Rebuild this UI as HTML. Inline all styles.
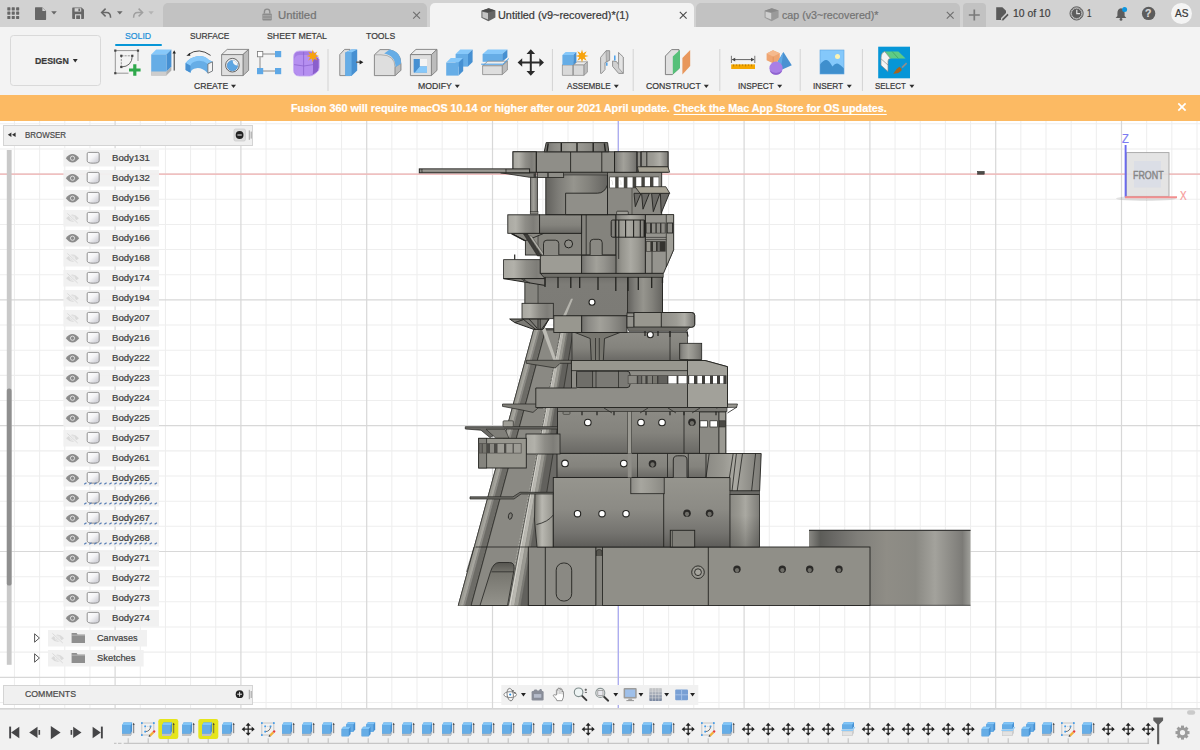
<!DOCTYPE html>
<html><head><meta charset="utf-8"><title>Fusion 360</title>
<style>
*{box-sizing:border-box;margin:0;padding:0}
html,body{width:1200px;height:750px;overflow:hidden;background:#fff;font-family:"Liberation Sans",sans-serif;}
#app{position:relative;width:1200px;height:750px;overflow:hidden;background:#fff}
.abs{position:absolute}
svg{position:absolute;overflow:visible}
.t{position:absolute;white-space:nowrap;transform-origin:0 50%;display:block;-webkit-text-stroke:0.22px}

</style></head><body>
<div id="app">
<svg class="abs" style="left:0;top:0" width="1200" height="750" viewBox="0 0 1200 750"><path d="M14.46 121V709M39.62 121V709M64.78 121V709M89.94 121V709M140.26 121V709M165.42 121V709M190.58 121V709M215.74 121V709M266.06 121V709M291.22 121V709M316.38 121V709M341.54 121V709M391.86 121V709M417.02 121V709M442.18 121V709M467.34 121V709M517.66 121V709M542.82 121V709M567.98 121V709M593.14 121V709M643.46 121V709M668.62 121V709M693.78 121V709M718.94 121V709M769.26 121V709M794.42 121V709M819.58 121V709M844.74 121V709M895.06 121V709M920.22 121V709M945.38 121V709M970.54 121V709M1020.86 121V709M1046.02 121V709M1071.18 121V709M1096.34 121V709M1146.66 121V709M1171.82 121V709M1196.98 121V709M0 123.78H1200M0 148.94H1200M0 199.26H1200M0 224.42H1200M0 249.58H1200M0 274.74H1200M0 325.06H1200M0 350.22H1200M0 375.38H1200M0 400.54H1200M0 450.86H1200M0 476.02H1200M0 501.18H1200M0 526.34H1200M0 576.66H1200M0 601.82H1200M0 626.98H1200M0 652.14H1200M0 702.46H1200" stroke="#eeeeee" stroke-width="1.05" fill="none"/><path d="M115.10 121V709M240.90 121V709M366.70 121V709M492.50 121V709M618.30 121V709M744.10 121V709M869.90 121V709M995.70 121V709M1121.50 121V709M0 174.10H1200M0 299.90H1200M0 425.70H1200M0 551.50H1200M0 677.30H1200" stroke="#d8d8d8" stroke-width="1.2" fill="none"/><path d="M0 174.1H1200" stroke="#f5b5b5" stroke-width="1.15" fill="none"/><path d="M618.3 121V709" stroke="#a6a6f4" stroke-width="1.15" fill="none"/><defs><linearGradient id="gCyl" x1="0" y1="0" x2="1" y2="0"><stop offset="0" stop-color="#72716d"/><stop offset="0.15" stop-color="#8b8a85"/><stop offset="0.4" stop-color="#a2a19a"/><stop offset="0.6" stop-color="#95948e"/><stop offset="0.85" stop-color="#7f7e79"/><stop offset="1" stop-color="#6e6d69"/></linearGradient><linearGradient id="gCylD" x1="0" y1="0" x2="1" y2="0"><stop offset="0" stop-color="#62615d"/><stop offset="0.2" stop-color="#7d7c77"/><stop offset="0.45" stop-color="#96958e"/><stop offset="0.7" stop-color="#83827c"/><stop offset="1" stop-color="#656460"/></linearGradient><linearGradient id="gPlatL" x1="0" y1="0" x2="1" y2="0"><stop offset="0" stop-color="#a9a8a1"/><stop offset="0.25" stop-color="#b2b1aa"/><stop offset="0.55" stop-color="#8e8d87"/><stop offset="0.8" stop-color="#7e7d78"/><stop offset="1" stop-color="#8b8a84"/></linearGradient><linearGradient id="gPlatR" x1="0" y1="0" x2="1" y2="0"><stop offset="0" stop-color="#8f8e88"/><stop offset="0.45" stop-color="#9d9c95"/><stop offset="0.7" stop-color="#b0afa8"/><stop offset="0.9" stop-color="#8a8984"/><stop offset="1" stop-color="#7a7974"/></linearGradient><linearGradient id="gWallV" x1="0" y1="0" x2="0" y2="1"><stop offset="0" stop-color="#96958e"/><stop offset="0.45" stop-color="#8c8b85"/><stop offset="0.8" stop-color="#74736f"/><stop offset="1" stop-color="#5e5d5a"/></linearGradient><linearGradient id="gWallV2" x1="0" y1="0" x2="0" y2="1"><stop offset="0" stop-color="#8d8c86"/><stop offset="0.55" stop-color="#84837d"/><stop offset="1" stop-color="#6a6965"/></linearGradient><linearGradient id="gBarb" x1="0" y1="0" x2="1" y2="0"><stop offset="0" stop-color="#8a8984"/><stop offset="0.07" stop-color="#5c5c58"/><stop offset="0.16" stop-color="#6a6966"/><stop offset="0.3" stop-color="#7f7e79"/><stop offset="0.48" stop-color="#8f8d86"/><stop offset="0.66" stop-color="#8a8983"/><stop offset="0.78" stop-color="#a3a29c"/><stop offset="0.88" stop-color="#8c8b86"/><stop offset="0.95" stop-color="#7c7b77"/><stop offset="1" stop-color="#a0a09b"/></linearGradient><linearGradient id="gBarbV" x1="0" y1="0" x2="0" y2="1"><stop offset="0" stop-color="#000"/><stop offset="0.12" stop-color="#000"/><stop offset="1" stop-color="#000"/></linearGradient><linearGradient id="gLeg" x1="0" y1="0" x2="1" y2="0"><stop offset="0" stop-color="#d2d1ca"/><stop offset="0.14" stop-color="#b9b8b1"/><stop offset="0.42" stop-color="#908f89"/><stop offset="0.58" stop-color="#6c6b67"/><stop offset="1" stop-color="#5c5b58"/></linearGradient><linearGradient id="gHullStrip" x1="0" y1="0" x2="1" y2="0"><stop offset="0" stop-color="#a8a7a0"/><stop offset="0.3" stop-color="#96958e"/><stop offset="0.45" stop-color="#6c6b66"/><stop offset="1" stop-color="#76756f"/></linearGradient><linearGradient id="gTur" x1="0" y1="0" x2="1" y2="0"><stop offset="0" stop-color="#7d7c77"/><stop offset="0.2" stop-color="#96958e"/><stop offset="0.5" stop-color="#abaaa3"/><stop offset="0.75" stop-color="#9a9992"/><stop offset="1" stop-color="#807f7a"/></linearGradient><linearGradient id="gMainW" x1="0" y1="0" x2="0" y2="1"><stop offset="0" stop-color="#6b6a66"/><stop offset="0.25" stop-color="#7d7c77"/><stop offset="1" stop-color="#7c7b76"/></linearGradient><linearGradient id="gNotch" x1="0" y1="0" x2="1" y2="0"><stop offset="0" stop-color="#8d8c86"/><stop offset="0.3" stop-color="#a7a69f"/><stop offset="0.6" stop-color="#9c9b94"/><stop offset="1" stop-color="#8a8983"/></linearGradient><linearGradient id="gConc" x1="0" y1="0" x2="1" y2="0"><stop offset="0" stop-color="#77766f"/><stop offset="0.4" stop-color="#b9b8b1"/><stop offset="1" stop-color="#94938c"/></linearGradient><linearGradient id="gArch" x1="0" y1="0" x2="0" y2="1"><stop offset="0" stop-color="#55544f"/><stop offset="0.25" stop-color="#77766f"/><stop offset="1" stop-color="#94938c"/></linearGradient><linearGradient id="gCurveR" x1="0" y1="0" x2="1" y2="0"><stop offset="0" stop-color="#8b8a84"/><stop offset="0.3" stop-color="#999891"/><stop offset="0.52" stop-color="#aaa9a2"/><stop offset="0.75" stop-color="#94938d"/><stop offset="1" stop-color="#7d7c77"/></linearGradient><linearGradient id="gShadeB" x1="0" y1="0" x2="0" y2="1"><stop offset="0.4" stop-color="#000" stop-opacity="0"/><stop offset="1" stop-color="#000" stop-opacity="0.22"/></linearGradient><linearGradient id="gShade" x1="0" y1="0" x2="0" y2="1"><stop offset="0" stop-color="#000" stop-opacity="0.22"/><stop offset="1" stop-color="#000" stop-opacity="0"/></linearGradient></defs><path d="M534.0 328.7L580.0 328.7L580.0 605.5L458.3 605.5z" fill="#6b6a66" stroke="#22221f" stroke-width="0.9" stroke-linejoin="round"/><path d="M533.6 330.0L535.8 330.0L460.6 605.5L458.3 605.5z" fill="#9d9c95" stroke="#9d9c95" stroke-width="0.3" stroke-linejoin="round"/><path d="M535.8 330.0L538.4 330.0L463.5 605.5L460.6 605.5z" fill="#a6a59e" stroke="#a6a59e" stroke-width="0.3" stroke-linejoin="round"/><path d="M538.4 330.0L540.2 330.0L465.4 605.5L463.5 605.5z" fill="#8a8984" stroke="#8a8984" stroke-width="0.3" stroke-linejoin="round"/><path d="M540.2 330.0L545.6 330.0L471.2 605.5L465.4 605.5z" fill="#6d6c67" stroke="#6d6c67" stroke-width="0.3" stroke-linejoin="round"/><path d="M533.6 330L458.3 605.5M545.6 330L471.2 605.5" fill="none" stroke="#22221f" stroke-width="0.6"/><path d="M545.6 330.0L561.0 330.0L509.0 605.5L471.2 605.5z" fill="#8a8983" stroke="#22221f" stroke-width="0.6" stroke-linejoin="round"/><path d="M560.3 332.0L561.8 332.0L510.9 605.5L508.5 605.5z" fill="#d3d2cb" stroke="#d3d2cb" stroke-width="0.3" stroke-linejoin="round"/><path d="M561.8 332.0L564.1 332.0L514.4 605.5L510.9 605.5z" fill="#bab9b2" stroke="#bab9b2" stroke-width="0.3" stroke-linejoin="round"/><path d="M564.1 332.0L566.6 332.0L518.4 605.5L514.4 605.5z" fill="#9a9992" stroke="#9a9992" stroke-width="0.3" stroke-linejoin="round"/><path d="M566.6 332.0L568.2 332.0L520.7 605.5L518.4 605.5z" fill="#7b7a75" stroke="#7b7a75" stroke-width="0.3" stroke-linejoin="round"/><path d="M568.2 332.0L573.0 332.0L528.2 605.5L520.7 605.5z" fill="#62615d" stroke="#62615d" stroke-width="0.3" stroke-linejoin="round"/><path d="M560.3 332L508.5 605.5M573.0 332L528.2 605.5" fill="none" stroke="#22221f" stroke-width="0.6"/><path d="M559 340L507 605.5" fill="none" stroke="#c9c8c1" stroke-width="0.5" stroke-dasharray="2 1.2"/><path d="M541.0 327.0L545.0 327.0L557.0 362.0L554.0 362.0z" fill="#bdbcb5"/><path d="M475.5 547H528.3" fill="none" stroke="#22221f" stroke-width="0.8"/><path d="M466.5 572L474 547" fill="none" stroke="#22221f" stroke-width="0.6"/><path d="M480 605.5L490.6 571.5Q493.5 562.5 499 562.5H509.5Q515.2 562.5 514 570L507.5 605.5z" fill="url(#gArch)" stroke="#22221f" stroke-width="0.8"/><path d="M491.5 571.8H513.6" fill="none" stroke="#22221f" stroke-width="0.7"/><ellipse cx="510.3" cy="516" rx="1.9" ry="3.3" fill="#807f79" stroke="#22221f" stroke-width="0.8" transform="rotate(12 510.3 516)"/><rect x="809.0" y="530.0" width="161.5" height="75.6" fill="url(#gBarb)"/><path d="M809 530.3H970.5" fill="none" stroke="#3a3a38" stroke-width="1.2"/><path d="M809 605.3H970.5" fill="none" stroke="#4a4a47" stroke-width="0.9"/><rect x="602.5" y="547.0" width="267.5" height="58.5" fill="#908f88" stroke="#22221f" stroke-width="0.9"/><path d="M708.3 547V605.5" fill="none" stroke="#22221f" stroke-width="0.9"/><rect x="595.8" y="547.0" width="6.7" height="58.5" fill="#85847e" stroke="#22221f" stroke-width="0.7"/><path d="M596.2 556v-4q0-2.6 3-2.6t3 2.6v4" fill="#56554f" stroke="#22221f" stroke-width="0.6"/><circle cx="698.0" cy="572.2" r="6.3" fill="#9a9992" stroke="#22221f" stroke-width="0.9"/><circle cx="698.0" cy="572.2" r="3.4" fill="#a6a59e" stroke="#22221f" stroke-width="0.9"/><circle cx="737.0" cy="569.3" r="3.7" fill="#2b2a28"/><path d="M735.0 569.8a2.04 1.85 0 0 1 4.07 0v1.11l-2.04 2.04l-2.04 -2.04z" fill="#6f6e68"/><circle cx="782.3" cy="569.3" r="3.7" fill="#2b2a28"/><path d="M780.3 569.8a2.04 1.85 0 0 1 4.07 0v1.11l-2.04 2.04l-2.04 -2.04z" fill="#6f6e68"/><circle cx="809.7" cy="569.3" r="3.7" fill="#2b2a28"/><path d="M807.7 569.8a2.04 1.85 0 0 1 4.07 0v1.11l-2.04 2.04l-2.04 -2.04z" fill="#6f6e68"/><circle cx="839.0" cy="569.3" r="3.7" fill="#2b2a28"/><path d="M837.0 569.8a2.04 1.85 0 0 1 4.07 0v1.11l-2.04 2.04l-2.04 -2.04z" fill="#6f6e68"/><rect x="528.3" y="547.0" width="67.5" height="58.5" fill="#8c8b85" stroke="#22221f" stroke-width="0.9"/><path d="M545.3 547V605.5" fill="none" stroke="#22221f" stroke-width="0.9"/><rect x="556.2" y="563.0" width="15.5" height="38.0" rx="7.2" fill="#8a8983" stroke="#22221f" stroke-width="0.9"/><path d="M535.0 492.5L553.3 492.5L553.3 547.0L537.0 547.0L534.5 520.0z" fill="url(#gConc)" stroke="#22221f" stroke-width="0.8" stroke-linejoin="round"/><path d="M553.3 515Q548 522 536.5 524.5" fill="none" stroke="#22221f" stroke-width="0.8"/><rect x="553.3" y="477.5" width="177.0" height="69.5" fill="url(#gWallV)" stroke="#22221f" stroke-width="0.9"/><path d="M663.7 493V547" fill="none" stroke="#22221f" stroke-width="0.9"/><rect x="630.8" y="477.5" width="33.4" height="16.2" fill="url(#gNotch)" stroke="#22221f" stroke-width="0.8"/><circle cx="577.5" cy="513.7" r="3.2" fill="#fff" stroke="#22221f" stroke-width="1.1"/><circle cx="602.0" cy="513.7" r="3.2" fill="#fff" stroke="#22221f" stroke-width="1.1"/><circle cx="626.0" cy="513.7" r="3.2" fill="#fff" stroke="#22221f" stroke-width="1.1"/><circle cx="687.0" cy="513.2" r="3.8" fill="#2b2a28"/><path d="M684.9 513.7a2.09 1.90 0 0 1 4.18 0v1.14l-2.09 2.09l-2.09 -2.09z" fill="#6f6e68"/><circle cx="709.6" cy="513.2" r="3.8" fill="#2b2a28"/><path d="M707.5 513.7a2.09 1.90 0 0 1 4.18 0v1.14l-2.09 2.09l-2.09 -2.09z" fill="#6f6e68"/><rect x="670.3" y="530.3" width="24.4" height="16.7" fill="#807f79" stroke="#22221f" stroke-width="0.9"/><path d="M672.4 531V547" fill="none" stroke="#22221f" stroke-width="0.6"/><rect x="730.0" y="494.4" width="29.6" height="52.6" fill="url(#gCurveR)" stroke="#22221f" stroke-width="0.8"/><rect x="730" y="494.4" width="29.6" height="52.6" fill="url(#gShadeB)"/><path d="M470.0 496.8L513.0 496.8L520.0 492.3L553.3 492.3L553.3 494.0L521.0 494.0L514.0 499.0L470.0 499.0z" fill="#6e6d68" stroke="#22221f" stroke-width="0.7" stroke-linejoin="round"/><rect x="557.0" y="453.3" width="151.0" height="24.2" fill="url(#gWallV2)" stroke="#22221f" stroke-width="0.9"/><path d="M706.0 453.5L761.2 453.5L759.6 491.0L730.0 491.0L730.0 477.6L706.0 477.6z" fill="url(#gCurveR)" stroke="#22221f" stroke-width="0.9" stroke-linejoin="round"/><rect x="730.0" y="490.9" width="29.6" height="3.5" fill="#6a6965" stroke="#22221f" stroke-width="0.6"/><path d="M637.5 453.3V477.5M667.5 453.3V477.5M688.3 453.3V477.5M709.2 453.5L706 477.6M733.2 453.5L729.4 477.6M736.4 453.5L732 491M742.5 453.5L737.2 491M755.6 453.5L751.6 491" fill="none" stroke="#22221f" stroke-width="0.8"/><circle cx="623.8" cy="463.6" r="3.3" fill="#fff" stroke="#22221f" stroke-width="1.1"/><circle cx="565.0" cy="463.4" r="3.3" fill="#fff" stroke="#22221f" stroke-width="1.1"/><circle cx="652.5" cy="463.7" r="3.8" fill="#2b2a28"/><path d="M650.4 464.2a2.09 1.90 0 0 1 4.18 0v1.14l-2.09 2.09l-2.09 -2.09z" fill="#6f6e68"/><path d="M673.3 477.5V460Q673.3 455.8 677.5 455.8H682.8Q687 455.8 687 460V477.5" fill="#868580" stroke="#22221f" stroke-width="0.9"/><rect x="557.5" y="407.5" width="168.3" height="45.8" fill="url(#gWallV2)" stroke="#22221f" stroke-width="0.9"/><rect x="627.5" y="408.0" width="4.2" height="45.3" fill="#9b9a93" stroke="#22221f" stroke-width="0.5"/><rect x="627.8" y="453.3" width="3.8" height="24.2" fill="#8f8e88"/><path d="M684 412V453.3M699.5 412V453.3M719 412V453.3" fill="none" stroke="#22221f" stroke-width="0.8"/><rect x="699.5" y="412.0" width="19.5" height="41.3" fill="#8b8a84" stroke="#22221f" stroke-width="0.7"/><rect x="719.0" y="412.0" width="6.8" height="41.3" fill="#9a9992" stroke="#22221f" stroke-width="0.7"/><circle cx="587.8" cy="422.5" r="3.3" fill="#fff" stroke="#22221f" stroke-width="1.1"/><circle cx="641.0" cy="422.5" r="3.3" fill="#fff" stroke="#22221f" stroke-width="1.1"/><circle cx="662.0" cy="422.5" r="3.3" fill="#fff" stroke="#22221f" stroke-width="1.1"/><circle cx="692.0" cy="422.3" r="3.8" fill="#2b2a28"/><path d="M689.9 422.8a2.09 1.90 0 0 1 4.18 0v1.14l-2.09 2.09l-2.09 -2.09z" fill="#6f6e68"/><rect x="700.0" y="420.8" width="7.5" height="6.2" fill="#fff" stroke="#22221f" stroke-width="0.7"/><rect x="710.0" y="420.8" width="7.5" height="6.2" fill="#fff" stroke="#22221f" stroke-width="0.7"/><rect x="719.4" y="420.8" width="6.0" height="6.2" fill="#4a4945" stroke="#22221f" stroke-width="0.5"/><rect x="557.5" y="407.5" width="169.5" height="4.1" fill="#7a7974" stroke="#22221f" stroke-width="0.6"/><path d="M582 411.6v3.6M597 411.6v3.6M614 411.6v3.6M646 411.6v3.6M670 411.6v3.6M684 411.6v3.6M716 411.6v3.6" fill="none" stroke="#22221f" stroke-width="1.2"/><path d="M604 408l8 5M648 408l-8 5M668 408l8 5M700 408l-8 5M716 408l10 -2" fill="none" stroke="#22221f" stroke-width="0.7"/><rect x="563.0" y="411.6" width="7.0" height="2.8" rx="1" fill="#8a8983" stroke="#22221f" stroke-width="0.5"/><rect x="526.0" y="434.0" width="34.0" height="20.0" fill="url(#gPlatL)" stroke="#22221f" stroke-width="0.8"/><path d="M465.3 426.7L557.5 426.7L557.5 429.0L505.0 429.0L490.0 437.6L481.0 430.2L465.3 429.0z" fill="#6a6965" stroke="#22221f" stroke-width="0.7" stroke-linejoin="round"/><path d="M486.0 429.2L505.0 429.2L509.0 438.3L496.0 438.3z" fill="#807f79" stroke="#22221f" stroke-width="0.6" stroke-linejoin="round"/><rect x="503.0" y="420.8" width="10.3" height="5.9" rx="1" fill="#a09f98" stroke="#22221f" stroke-width="0.6"/><rect x="478.7" y="438.3" width="47.6" height="29.7" fill="#98978f" stroke="#22221f" stroke-width="0.9"/><rect x="478.7" y="438.3" width="8.0" height="29.7" fill="#85847e" stroke="#22221f" stroke-width="0.7"/><rect x="478.7" y="443.2" width="42.8" height="10.2" fill="#4c4b47"/><rect x="479.4" y="443.8" width="2.4" height="9.0" fill="#6d6c67"/><rect x="482.8" y="443.8" width="3.4" height="9.0" fill="#77766f"/><rect x="490.0" y="443.8" width="4.0" height="9.0" fill="#8a8983"/><rect x="497.5" y="443.8" width="6.5" height="9.0" fill="#9d9c95"/><rect x="506.3" y="443.8" width="6.3" height="9.0" fill="#9d9c95"/><rect x="513.8" y="443.8" width="7.0" height="9.0" fill="#9d9c95"/><path d="M526.3 360.3L571.3 360.3L571.3 363.3L560.0 363.3L555.3 368.0L540.0 365.5L526.3 363.3z" fill="#77766f" stroke="#22221f" stroke-width="0.7" stroke-linejoin="round"/><path d="M502.5 404.0L543.0 404.0L543.0 408.0L538.0 408.0L533.0 412.4L522.0 410.0L502.5 406.4z" fill="#807f79" stroke="#22221f" stroke-width="0.7" stroke-linejoin="round"/><path d="M571.5 360.5L705.0 360.5L727.5 366.7L727.5 407.5L535.8 407.5L535.8 388.0L571.5 388.0z" fill="#8f8e88" stroke="#22221f" stroke-width="0.9" stroke-linejoin="round"/><path d="M687.5 360.5L705.0 360.5L727.5 366.7L727.5 407.5L687.5 407.5z" fill="#a2a19a" stroke="#22221f" stroke-width="0.9" stroke-linejoin="round"/><rect x="576.7" y="371.2" width="53.3" height="16.4" rx="3" fill="#7b7a75" stroke="#22221f" stroke-width="0.9"/><rect x="576.7" y="371.2" width="16.0" height="16.4" fill="#6f6e69" stroke="#22221f" stroke-width="0.7"/><path d="M571.5 388H576.7" fill="none" stroke="#22221f" stroke-width="0.8"/><rect x="627.8" y="375.3" width="98.6" height="8.7" fill="#3f3e3b"/><rect x="628.4" y="375.9" width="8.4" height="7.6" fill="#8b8a84"/><rect x="638.2" y="375.9" width="3.0" height="7.6" fill="#6b6a66"/><rect x="642.2" y="375.9" width="3.2" height="7.6" fill="#85847e"/><rect x="647.6" y="375.9" width="4.4" height="7.6" fill="#807f79"/><rect x="653.0" y="375.9" width="4.0" height="7.6" fill="#77766f"/><rect x="658.4" y="375.9" width="8.6" height="7.6" fill="#62615d"/><rect x="668.4" y="375.9" width="8.2" height="7.6" fill="#fff"/><rect x="678.4" y="375.9" width="8.2" height="7.6" fill="#fff"/><rect x="689.2" y="375.9" width="4.8" height="7.6" fill="#fff"/><rect x="697.4" y="375.9" width="4.6" height="7.6" fill="#fff"/><rect x="705.0" y="375.9" width="5.0" height="7.6" fill="#fff"/><rect x="713.0" y="375.9" width="4.0" height="7.6" fill="#fff"/><rect x="720.0" y="375.9" width="3.4" height="7.6" fill="#fff"/><path d="M727.5 404.0L737.5 404.0L736.6 407.3L727.5 407.5z" fill="#9a9992" stroke="#22221f" stroke-width="0.7" stroke-linejoin="round"/><path d="M737 407L727.5 413" fill="none" stroke="#22221f" stroke-width="0.8"/><rect x="572.0" y="332.5" width="115.5" height="28.0" fill="url(#gWallV2)" stroke="#22221f" stroke-width="0.7"/><path d="M670 331V360.5" fill="none" stroke="#22221f" stroke-width="0.8"/><path d="M575.0 332.5L620.0 332.5L604.5 338.5L603.3 360.5L591.3 360.5L590.2 338.5z" fill="#77766f" stroke="#22221f" stroke-width="0.8" stroke-linejoin="round"/><path d="M595.5 338V360M599.3 338V360" fill="none" stroke="#22221f" stroke-width="0.7"/><rect x="679.7" y="343.3" width="22.0" height="16.3" fill="url(#gCyl)" stroke="#22221f" stroke-width="0.8"/><rect x="571.5" y="360.5" width="116.0" height="10.2" fill="#98978f" stroke="#22221f" stroke-width="0.8"/><path d="M596 370.7V388M618.5 370.7V388" fill="none" stroke="#22221f" stroke-width="0.7"/><circle cx="650.3" cy="334.7" r="3.0" fill="#fff" stroke="#22221f" stroke-width="1.1"/><rect x="525.0" y="273.3" width="137.5" height="42.7" fill="url(#gMainW)" stroke="#22221f" stroke-width="0.9"/><rect x="525.0" y="273.3" width="13.0" height="42.7" fill="#878680" stroke="#22221f" stroke-width="0.6"/><rect x="627.5" y="277.0" width="35.0" height="36.0" fill="url(#gCylD)" stroke="#22221f" stroke-width="0.8"/><path d="M541.5 273.3L663.3 273.3L663.3 277.3L541.5 277.3z" fill="#6f6e69" stroke="#22221f" stroke-width="0.6" stroke-linejoin="round"/><path d="M545 277v10M558 277v11M570.8 277v11M579.7 277v11M598 277v13M615.8 277v14M628 277v14M638.3 277v13M651.7 277v11M662.5 277v6" fill="none" stroke="#22221f" stroke-width="1.3"/><path d="M571.0 298.8L573.0 298.8L566.0 316.0L563.0 316.0z" fill="#b5b4ad"/><circle cx="592.0" cy="302.2" r="3.0" fill="#fff" stroke="#22221f" stroke-width="1.1"/><path d="M509.7 319.0L549.0 319.0L543.0 329.3L533.5 329.3L514.8 322.6z" fill="#7b7a75" stroke="#22221f" stroke-width="1.0" stroke-linejoin="round"/><path d="M538 319V329.3M540.200 319V329.3M523 319L535.500 329.300M529 319L537 328M549 319L541.500 329.300M514.800 322.600L523.500 319.600" fill="none" stroke="#22221f" stroke-width="0.9"/><rect x="522.0" y="303.3" width="31.3" height="15.4" fill="url(#gPlatL)" stroke="#22221f" stroke-width="0.8"/><rect x="553.8" y="315.8" width="27.9" height="16.7" fill="#98978f" stroke="#22221f" stroke-width="0.9"/><rect x="581.7" y="315.8" width="45.3" height="16.7" fill="url(#gCyl)" stroke="#22221f" stroke-width="0.9"/><rect x="627.0" y="313.0" width="7.0" height="14.4" fill="#94938d" stroke="#22221f" stroke-width="0.8"/><path d="M627 316.5H634" fill="none" stroke="#22221f" stroke-width="0.6"/><path d="M634 312.5H691.5Q694.7 312.5 694.7 315.5V324.4Q694.7 327.2 691.5 327.2H634z" fill="#98978f" stroke="#22221f" stroke-width="0.9"/><path d="M661.3 312.5H691.5Q694.7 312.5 694.7 315.5V324.4Q694.7 327.2 691.5 327.2H661.3z" fill="url(#gPlatR)" stroke="#22221f" stroke-width="0.9"/><path d="M627.0 327.2L690.0 327.2L686.0 331.4L629.0 331.4z" fill="#6d6c67" stroke="#22221f" stroke-width="0.6" stroke-linejoin="round"/><path d="M645 331v5M658 331v5M670 331v6M686.8 330.5l1.2 6" fill="none" stroke="#22221f" stroke-width="1.2"/><path d="M503.5 259.6L540.3 259.6L540.3 273.3L545.0 278.6L503.5 278.6z" fill="url(#gPlatL)" stroke="#22221f" stroke-width="0.8" stroke-linejoin="round"/><path d="M503.5 278.6L544.8 278.6L544.8 285.4z" fill="#817f7a" stroke="#22221f" stroke-width="1.0" stroke-linejoin="round"/><path d="M521 278.600L530 283M525.500 278.600L522.500 281.800" fill="none" stroke="#22221f" stroke-width="0.7"/><path d="M514.7 254.5V259.6" fill="none" stroke="#22221f" stroke-width="1.2"/><rect x="540.3" y="254.9" width="41.3" height="18.4" fill="#9d9c95" stroke="#22221f" stroke-width="0.9"/><rect x="581.6" y="254.9" width="37.1" height="18.4" fill="url(#gCyl)" stroke="#22221f" stroke-width="0.9"/><rect x="525.4" y="233.3" width="90.6" height="21.6" fill="#85847e" stroke="#22221f" stroke-width="0.9"/><rect x="525.4" y="233.3" width="12.6" height="21.6" fill="#8f8e88" stroke="#22221f" stroke-width="0.6"/><path d="M511.5 233.3L544.0 233.3L530.2 239.0L524.9 240.7z" fill="#8a8983" stroke="#22221f" stroke-width="0.9" stroke-linejoin="round"/><path d="M511.5 233.6L524.9 240.7" fill="none" stroke="#22221f" stroke-width="1.4"/><path d="M523.5 234.0L527.5 234.0L541.5 256.0L537.5 256.0z" fill="#3d3c39" stroke="#22221f" stroke-width="0.5" stroke-linejoin="round"/><path d="M529.0 236.0L531.5 236.0L544.5 255.0L542.0 255.0z" fill="#b1b0a9" stroke="#22221f" stroke-width="0.4" stroke-linejoin="round"/><rect x="581.6" y="214.8" width="34.4" height="40.1" fill="#84837d" stroke="#22221f" stroke-width="0.9"/><path d="M586.2 214.8V254.9" fill="none" stroke="#22221f" stroke-width="0.8"/><path d="M543.5 254.9V243.6Q543.5 240.2 546.9 240.2H555.4Q558.8 240.2 558.8 243.6V254.9" fill="#8a8983" stroke="#22221f" stroke-width="0.9"/><path d="M590.1 254.9V242.70000000000002Q590.1 239.3 593.5 239.3H598.8000000000001Q602.2 239.3 602.2 242.70000000000002V254.9" fill="#8a8983" stroke="#22221f" stroke-width="0.9"/><circle cx="568.6" cy="243.9" r="4.0" fill="#8d8c86" stroke="#22221f" stroke-width="1.0"/><rect x="507.8" y="214.8" width="31.8" height="18.5" fill="url(#gPlatL)" stroke="#22221f" stroke-width="0.9"/><rect x="539.6" y="214.8" width="42.0" height="18.5" fill="url(#gWallV2)" stroke="#22221f" stroke-width="0.9"/><path d="M645.3 214.6L673.6 214.6L673.6 249.8L663.5 273.3L645.3 273.3z" fill="#95948e" stroke="#22221f" stroke-width="0.9" stroke-linejoin="round"/><path d="M666.3 214.6L673.6 214.6L673.6 249.8L666.3 266.8z" fill="#9f9e97" stroke="#22221f" stroke-width="0.7" stroke-linejoin="round"/><path d="M652 241V273.3" fill="none" stroke="#22221f" stroke-width="0.8"/><rect x="645.8" y="222.6" width="19.8" height="10.8" fill="#383734"/><rect x="646.6" y="223.4" width="3.4" height="9.4" fill="#8d8c86"/><rect x="652.0" y="223.4" width="3.4" height="9.4" fill="#8d8c86"/><rect x="656.8" y="223.4" width="3.2" height="9.4" fill="#8d8c86"/><rect x="661.4" y="223.4" width="3.4" height="9.4" fill="#8d8c86"/><rect x="667.2" y="223.0" width="5.4" height="10.0" fill="#908f89" stroke="#22221f" stroke-width="0.9"/><path d="M645.3 237.4H666.3M645.3 239.6H666.3" fill="none" stroke="#22221f" stroke-width="0.6"/><rect x="645.8" y="241.2" width="19.8" height="10.4" fill="#34332f"/><rect x="646.6" y="241.9" width="3.8" height="9.1" fill="#98978f"/><rect x="653.0" y="241.9" width="3.0" height="9.1" fill="#8a8983"/><rect x="657.6" y="241.9" width="2.2" height="9.1" fill="#6a6965"/><rect x="616.0" y="214.6" width="29.3" height="58.7" fill="url(#gTur)" stroke="#22221f" stroke-width="0.9"/><rect x="611.2" y="220.0" width="34.1" height="17.2" rx="1.6" fill="url(#gTur)" stroke="#22221f" stroke-width="1.0"/><path d="M615.6 220V237.2M644.4 220V237.2" fill="none" stroke="#22221f" stroke-width="1.6"/><path d="M618.8 220V237.2M625.6 220V237.2M633.6 220V237.2M640.3 220V237.2" fill="none" stroke="#22221f" stroke-width="1.1"/><path d="M618.7 237.2V259" fill="none" stroke="#22221f" stroke-width="0.8"/><rect x="530.5" y="177.0" width="7.1" height="36.2" fill="url(#gCyl)" stroke="#22221f" stroke-width="0.7"/><rect x="530.2" y="211.6" width="7.8" height="2.4" fill="#8a8983" stroke="#22221f" stroke-width="0.5"/><rect x="545.8" y="172.0" width="61.7" height="42.6" fill="url(#gCylD)" stroke="#22221f" stroke-width="0.9"/><path d="M565.6 214.6V193.2H597.5Q604.5 193.2 607.5 185V214.6z" fill="#908f89" stroke="#22221f" stroke-width="0.9"/><rect x="607.5" y="172.0" width="54.2" height="42.6" fill="#8a8983" stroke="#22221f" stroke-width="0.9"/><path d="M632 188V214.6" fill="none" stroke="#22221f" stroke-width="0.5"/><rect x="609.4" y="176.6" width="49.6" height="11.6" fill="#45443f"/><rect x="610.0" y="177.3" width="5.2" height="10.3" fill="#fff"/><rect x="618.6" y="177.3" width="5.2" height="10.3" fill="#fff"/><rect x="627.4" y="177.3" width="5.2" height="10.3" fill="#fff"/><rect x="636.2" y="177.3" width="5.2" height="10.3" fill="#fff"/><rect x="644.8" y="177.3" width="5.2" height="10.3" fill="#fff"/><rect x="653.4" y="177.3" width="5.2" height="10.3" fill="#fff"/><path d="M619.8 180q1.6 1 1.2 5M611.4 180q1.6 1 1.2 5" fill="none" stroke="#d8d8d4" stroke-width="0.8"/><path d="M634.0 193.3L641.0 193.3L635.3 206.7z" fill="#6a6965" stroke="#22221f" stroke-width="0.9" stroke-linejoin="round"/><path d="M641.6 193.3L649.4 193.3L643.0 209.2z" fill="#6a6965" stroke="#22221f" stroke-width="0.9" stroke-linejoin="round"/><path d="M651.6 193.3L660.0 193.3L653.3 211.7z" fill="#6a6965" stroke="#22221f" stroke-width="0.9" stroke-linejoin="round"/><path d="M660.4 193.3L669.4 193.3L661.2 213.2z" fill="#6a6965" stroke="#22221f" stroke-width="0.9" stroke-linejoin="round"/><path d="M635.0 186.7L665.8 186.7L669.8 193.3L640.0 193.3z" fill="#a6a294" stroke="#22221f" stroke-width="0.8" stroke-linejoin="round"/><rect x="616.6" y="211.2" width="11.7" height="3.4" rx="1" fill="#a09f98" stroke="#22221f" stroke-width="0.7"/><rect x="537.3" y="172.4" width="26.4" height="5.1" fill="#8e8d87" stroke="#22221f" stroke-width="0.8"/><path d="M548 172.400V177.500" fill="none" stroke="#22221f" stroke-width="1.2"/><rect x="563.5" y="172.0" width="44.0" height="3.0" fill="#6f6e69" stroke="#22221f" stroke-width="0.5"/><rect x="513.0" y="151.8" width="155.0" height="20.4" fill="#8f8e88" stroke="#22221f" stroke-width="0.9"/><rect x="513.0" y="151.8" width="23.3" height="20.4" fill="url(#gPlatL)" stroke="#22221f" stroke-width="0.9"/><rect x="614.5" y="151.8" width="22.5" height="20.4" fill="url(#gCyl)" stroke="#22221f" stroke-width="0.8"/><rect x="641.0" y="151.8" width="27.0" height="15.0" fill="url(#gPlatR)" stroke="#22221f" stroke-width="0.8"/><path d="M536.3 151.8V172.2M570.6 151.8V172.2M601.8 151.8V172.2M614.5 151.8V172.2M637 151.8V172.2M641 151.8V166.8M646.8 152V166.8" fill="none" stroke="#22221f" stroke-width="0.9"/><path d="M637.4 166.8L668.0 166.8L669.6 172.2L638.6 172.2z" fill="#a6a294" stroke="#22221f" stroke-width="0.8" stroke-linejoin="round"/><path d="M546.2 142.6L607.6 142.6L608.8 151.8L544.2 151.8z" fill="url(#gCyl)" stroke="#22221f" stroke-width="0.9" stroke-linejoin="round"/><path d="M548.2 143.4L547 151.6M561.3 143V151.8M577 143V151.8M593.2 143V151.8M604.4 143.4L605.4 151.6" fill="none" stroke="#22221f" stroke-width="1.4"/><path d="M500.6 172.8L536.0 172.8L536.0 177.5L529.0 177.2z" fill="#7c7b76" stroke="#22221f" stroke-width="0.8" stroke-linejoin="round"/><rect x="533.6" y="173.4" width="2.4" height="4.1" fill="#3b3a37"/><rect x="419.3" y="168.9" width="110.3" height="3.9" fill="#8f8e88" stroke="#22221f" stroke-width="1.0"/><path d="M422 169v3.600M506 169V172.800" fill="none" stroke="#22221f" stroke-width="0.7"/><path d="M422.500 170.200H505" fill="none" stroke="#a9a8a1" stroke-width="0.7"/><rect x="977.6" y="171.4" width="6.6" height="2.8" fill="#4e4d4a" stroke="#22221f" stroke-width="0.5"/></svg>
<svg class="abs" style="left:1100px;top:125px" width="100" height="85" viewBox="1100 125 100 85"><ellipse cx="1146" cy="198.4" rx="30" ry="2.6" fill="#000" fill-opacity="0.10"/><rect x="1126.4" y="152.6" width="42.6" height="43.8" fill="#e1e1e1" fill-opacity="0.9" stroke="#a4a4a4" stroke-width="0.9"/><rect x="1134" y="161" width="27" height="26.4" fill="#d8dce6" fill-opacity="0.8"/><path d="M1125.6 145V197.4" stroke="#6a6af0" stroke-width="1.9"/><path d="M1125 197.2H1177" stroke="#f28f8f" stroke-width="1.9"/></svg><span class="t" style="left:1132.60px;top:168.58px;font-size:11.6px;line-height:11.6px;color:#868686;transform:scaleX(0.7660);-webkit-text-stroke:0.45px;">FRONT</span><span class="t" style="left:1121.80px;top:132.73px;font-size:12.6px;line-height:12.6px;color:#7c7cf2;transform:scaleX(0.8835);">Z</span><span class="t" style="left:1180.00px;top:190.04px;font-size:12px;line-height:12px;color:#f79b9b;transform:scaleX(0.8246);">X</span>
<div class="abs" style="left:3px;top:125px;width:249.5px;height:20.5px;background:#f0f0f0;border:1px solid #d4d4d4;"></div>
<div class="abs" style="left:3px;top:684.5px;width:249.5px;height:20px;background:#f0f0f0;border:1px solid #d4d4d4;"></div><svg class="abs" style="left:0;top:121px" width="260" height="588" viewBox="0 121 260 588"><defs><linearGradient id="bodyg" x1="0" y1="0" x2="1" y2="1"><stop offset="0" stop-color="#ffffff"/><stop offset="0.45" stop-color="#f4f4f6"/><stop offset="1" stop-color="#c4c4cc"/></linearGradient></defs><path d="M11.4 132.6v4.4l-3.6-2.2zM15.6 132.6v4.4l-3.6-2.2z" fill="#333"/><rect x="234" y="129" width="11.4" height="12" rx="1.5" fill="#dedede" stroke="#c2c2c2" stroke-width="0.6"/><circle cx="239.6" cy="135" r="3.9" fill="#222"/><rect x="237.4" y="134.4" width="4.4" height="1.2" fill="#cfcfcf"/><path d="M249.3 130.4v9.4M251.2 131.6v7" stroke="#8a8a8a" stroke-width="0.8"/><circle cx="239.6" cy="694.2" r="3.9" fill="#222"/><path d="M237.2 694.2h4.8M239.6 691.8v4.8" stroke="#e8e8e8" stroke-width="1"/><path d="M249.3 689.8v9.4M251.2 691v7" stroke="#8a8a8a" stroke-width="0.8"/><rect x="6.8" y="150" width="4.8" height="514.8" fill="#c9c9c9"/><rect x="6.8" y="388.6" width="4.8" height="197" rx="2.2" fill="#8f8f8f"/><rect x="63.4" y="148.2" width="95.6" height="1.8" fill="#f7f7f7"/><rect x="63.4" y="150" width="95.6" height="16.5" fill="#f0f0f0" fill-opacity="0.94"/><path d="M65.8 158.2Q72.5 149.79999999999998 79.2 158.2Q72.5 166.6 65.8 158.2z" fill="#8b8b8b"/><circle cx="72.5" cy="158.2" r="2.1" fill="none" stroke="#dedede" stroke-width="1"/><path d="M87.2 153.8q0-1.4 1.4-1.4h9.2q1.4 0 1.4 1.4v7q0 2.4-6 2.4t-6-2.4z" fill="url(#bodyg)" stroke="#868686" stroke-width="0.9"/><rect x="63.4" y="170" width="95.6" height="16.5" fill="#f0f0f0" fill-opacity="0.94"/><path d="M65.8 178.2Q72.5 169.79999999999998 79.2 178.2Q72.5 186.6 65.8 178.2z" fill="#8b8b8b"/><circle cx="72.5" cy="178.2" r="2.1" fill="none" stroke="#dedede" stroke-width="1"/><path d="M87.2 173.8q0-1.4 1.4-1.4h9.2q1.4 0 1.4 1.4v7q0 2.4-6 2.4t-6-2.4z" fill="url(#bodyg)" stroke="#868686" stroke-width="0.9"/><rect x="63.4" y="190" width="95.6" height="16.5" fill="#f0f0f0" fill-opacity="0.94"/><path d="M65.8 198.2Q72.5 189.79999999999998 79.2 198.2Q72.5 206.6 65.8 198.2z" fill="#8b8b8b"/><circle cx="72.5" cy="198.2" r="2.1" fill="none" stroke="#dedede" stroke-width="1"/><path d="M87.2 193.8q0-1.4 1.4-1.4h9.2q1.4 0 1.4 1.4v7q0 2.4-6 2.4t-6-2.4z" fill="url(#bodyg)" stroke="#868686" stroke-width="0.9"/><rect x="63.4" y="210" width="95.6" height="16.5" fill="#f0f0f0" fill-opacity="0.94"/><path d="M66.1 218.2Q72.5 211.0 78.9 218.2Q72.5 225.39999999999998 66.1 218.2z" fill="#dadada"/><circle cx="72.5" cy="218.2" r="2.3" fill="none" stroke="#ececec" stroke-width="0.9"/><path d="M66.9 212.79999999999998L78.1 223.39999999999998" stroke="#f1f1f1" stroke-width="2.4"/><path d="M67.3 213.39999999999998L77.7 223.0" stroke="#dadada" stroke-width="1"/><path d="M87.2 213.8q0-1.4 1.4-1.4h9.2q1.4 0 1.4 1.4v7q0 2.4-6 2.4t-6-2.4z" fill="url(#bodyg)" stroke="#868686" stroke-width="0.9"/><rect x="63.4" y="230" width="95.6" height="16.5" fill="#f0f0f0" fill-opacity="0.94"/><path d="M65.8 238.2Q72.5 229.79999999999998 79.2 238.2Q72.5 246.6 65.8 238.2z" fill="#8b8b8b"/><circle cx="72.5" cy="238.2" r="2.1" fill="none" stroke="#dedede" stroke-width="1"/><path d="M87.2 233.8q0-1.4 1.4-1.4h9.2q1.4 0 1.4 1.4v7q0 2.4-6 2.4t-6-2.4z" fill="url(#bodyg)" stroke="#868686" stroke-width="0.9"/><rect x="63.4" y="250" width="95.6" height="16.5" fill="#f0f0f0" fill-opacity="0.94"/><path d="M66.1 258.2Q72.5 251.0 78.9 258.2Q72.5 265.4 66.1 258.2z" fill="#dadada"/><circle cx="72.5" cy="258.2" r="2.3" fill="none" stroke="#ececec" stroke-width="0.9"/><path d="M66.9 252.79999999999998L78.1 263.4" stroke="#f1f1f1" stroke-width="2.4"/><path d="M67.3 253.39999999999998L77.7 263.0" stroke="#dadada" stroke-width="1"/><path d="M87.2 253.8q0-1.4 1.4-1.4h9.2q1.4 0 1.4 1.4v7q0 2.4-6 2.4t-6-2.4z" fill="url(#bodyg)" stroke="#868686" stroke-width="0.9"/><rect x="63.4" y="270" width="95.6" height="16.5" fill="#f0f0f0" fill-opacity="0.94"/><path d="M66.1 278.2Q72.5 271.0 78.9 278.2Q72.5 285.4 66.1 278.2z" fill="#dadada"/><circle cx="72.5" cy="278.2" r="2.3" fill="none" stroke="#ececec" stroke-width="0.9"/><path d="M66.9 272.8L78.1 283.4" stroke="#f1f1f1" stroke-width="2.4"/><path d="M67.3 273.4L77.7 283.0" stroke="#dadada" stroke-width="1"/><path d="M87.2 273.8q0-1.4 1.4-1.4h9.2q1.4 0 1.4 1.4v7q0 2.4-6 2.4t-6-2.4z" fill="url(#bodyg)" stroke="#868686" stroke-width="0.9"/><rect x="63.4" y="290" width="95.6" height="16.5" fill="#f0f0f0" fill-opacity="0.94"/><path d="M66.1 298.2Q72.5 291.0 78.9 298.2Q72.5 305.4 66.1 298.2z" fill="#dadada"/><circle cx="72.5" cy="298.2" r="2.3" fill="none" stroke="#ececec" stroke-width="0.9"/><path d="M66.9 292.8L78.1 303.4" stroke="#f1f1f1" stroke-width="2.4"/><path d="M67.3 293.4L77.7 303.0" stroke="#dadada" stroke-width="1"/><path d="M87.2 293.8q0-1.4 1.4-1.4h9.2q1.4 0 1.4 1.4v7q0 2.4-6 2.4t-6-2.4z" fill="url(#bodyg)" stroke="#868686" stroke-width="0.9"/><rect x="63.4" y="310" width="95.6" height="16.5" fill="#f0f0f0" fill-opacity="0.94"/><path d="M66.1 318.2Q72.5 311.0 78.9 318.2Q72.5 325.4 66.1 318.2z" fill="#dadada"/><circle cx="72.5" cy="318.2" r="2.3" fill="none" stroke="#ececec" stroke-width="0.9"/><path d="M66.9 312.8L78.1 323.4" stroke="#f1f1f1" stroke-width="2.4"/><path d="M67.3 313.4L77.7 323.0" stroke="#dadada" stroke-width="1"/><path d="M87.2 313.8q0-1.4 1.4-1.4h9.2q1.4 0 1.4 1.4v7q0 2.4-6 2.4t-6-2.4z" fill="url(#bodyg)" stroke="#868686" stroke-width="0.9"/><rect x="63.4" y="330" width="95.6" height="16.5" fill="#f0f0f0" fill-opacity="0.94"/><path d="M65.8 338.2Q72.5 329.8 79.2 338.2Q72.5 346.59999999999997 65.8 338.2z" fill="#8b8b8b"/><circle cx="72.5" cy="338.2" r="2.1" fill="none" stroke="#dedede" stroke-width="1"/><path d="M87.2 333.8q0-1.4 1.4-1.4h9.2q1.4 0 1.4 1.4v7q0 2.4-6 2.4t-6-2.4z" fill="url(#bodyg)" stroke="#868686" stroke-width="0.9"/><rect x="63.4" y="350" width="95.6" height="16.5" fill="#f0f0f0" fill-opacity="0.94"/><path d="M65.8 358.2Q72.5 349.8 79.2 358.2Q72.5 366.59999999999997 65.8 358.2z" fill="#8b8b8b"/><circle cx="72.5" cy="358.2" r="2.1" fill="none" stroke="#dedede" stroke-width="1"/><path d="M87.2 353.8q0-1.4 1.4-1.4h9.2q1.4 0 1.4 1.4v7q0 2.4-6 2.4t-6-2.4z" fill="url(#bodyg)" stroke="#868686" stroke-width="0.9"/><rect x="63.4" y="370" width="95.6" height="16.5" fill="#f0f0f0" fill-opacity="0.94"/><path d="M65.8 378.2Q72.5 369.8 79.2 378.2Q72.5 386.59999999999997 65.8 378.2z" fill="#8b8b8b"/><circle cx="72.5" cy="378.2" r="2.1" fill="none" stroke="#dedede" stroke-width="1"/><path d="M87.2 373.8q0-1.4 1.4-1.4h9.2q1.4 0 1.4 1.4v7q0 2.4-6 2.4t-6-2.4z" fill="url(#bodyg)" stroke="#868686" stroke-width="0.9"/><rect x="63.4" y="390" width="95.6" height="16.5" fill="#f0f0f0" fill-opacity="0.94"/><path d="M65.8 398.2Q72.5 389.8 79.2 398.2Q72.5 406.59999999999997 65.8 398.2z" fill="#8b8b8b"/><circle cx="72.5" cy="398.2" r="2.1" fill="none" stroke="#dedede" stroke-width="1"/><path d="M87.2 393.8q0-1.4 1.4-1.4h9.2q1.4 0 1.4 1.4v7q0 2.4-6 2.4t-6-2.4z" fill="url(#bodyg)" stroke="#868686" stroke-width="0.9"/><rect x="63.4" y="410" width="95.6" height="16.5" fill="#f0f0f0" fill-opacity="0.94"/><path d="M65.8 418.2Q72.5 409.8 79.2 418.2Q72.5 426.59999999999997 65.8 418.2z" fill="#8b8b8b"/><circle cx="72.5" cy="418.2" r="2.1" fill="none" stroke="#dedede" stroke-width="1"/><path d="M87.2 413.8q0-1.4 1.4-1.4h9.2q1.4 0 1.4 1.4v7q0 2.4-6 2.4t-6-2.4z" fill="url(#bodyg)" stroke="#868686" stroke-width="0.9"/><rect x="63.4" y="430" width="95.6" height="16.5" fill="#f0f0f0" fill-opacity="0.94"/><path d="M66.1 438.2Q72.5 431.0 78.9 438.2Q72.5 445.4 66.1 438.2z" fill="#dadada"/><circle cx="72.5" cy="438.2" r="2.3" fill="none" stroke="#ececec" stroke-width="0.9"/><path d="M66.9 432.8L78.1 443.4" stroke="#f1f1f1" stroke-width="2.4"/><path d="M67.3 433.4L77.7 443.0" stroke="#dadada" stroke-width="1"/><path d="M87.2 433.8q0-1.4 1.4-1.4h9.2q1.4 0 1.4 1.4v7q0 2.4-6 2.4t-6-2.4z" fill="url(#bodyg)" stroke="#868686" stroke-width="0.9"/><rect x="63.4" y="450" width="95.6" height="16.5" fill="#f0f0f0" fill-opacity="0.94"/><path d="M65.8 458.2Q72.5 449.8 79.2 458.2Q72.5 466.59999999999997 65.8 458.2z" fill="#8b8b8b"/><circle cx="72.5" cy="458.2" r="2.1" fill="none" stroke="#dedede" stroke-width="1"/><path d="M87.2 453.8q0-1.4 1.4-1.4h9.2q1.4 0 1.4 1.4v7q0 2.4-6 2.4t-6-2.4z" fill="url(#bodyg)" stroke="#868686" stroke-width="0.9"/><rect x="63.4" y="470" width="95.6" height="16.5" fill="#f0f0f0" fill-opacity="0.94"/><path d="M65.8 478.2Q72.5 469.8 79.2 478.2Q72.5 486.59999999999997 65.8 478.2z" fill="#8b8b8b"/><circle cx="72.5" cy="478.2" r="2.1" fill="none" stroke="#dedede" stroke-width="1"/><path d="M87.2 473.8q0-1.4 1.4-1.4h9.2q1.4 0 1.4 1.4v7q0 2.4-6 2.4t-6-2.4z" fill="url(#bodyg)" stroke="#868686" stroke-width="0.9"/><path d="M84.20 484.3l2.3 -1.6M89.23 484.3l2.3 -1.6M94.26 484.3l2.3 -1.6M99.29 484.3l2.3 -1.6M104.32 484.3l2.3 -1.6M109.35 484.3l2.3 -1.6M114.38 484.3l2.3 -1.6M119.41 484.3l2.3 -1.6M124.44 484.3l2.3 -1.6M129.47 484.3l2.3 -1.6M134.50 484.3l2.3 -1.6M139.53 484.3l2.3 -1.6M144.56 484.3l2.3 -1.6M149.59 484.3l2.3 -1.6M154.62 484.3l2.3 -1.6" stroke="#5a7fb6" stroke-width="1.25" fill="none"/><rect x="63.4" y="490" width="95.6" height="16.5" fill="#f0f0f0" fill-opacity="0.94"/><path d="M65.8 498.2Q72.5 489.8 79.2 498.2Q72.5 506.59999999999997 65.8 498.2z" fill="#8b8b8b"/><circle cx="72.5" cy="498.2" r="2.1" fill="none" stroke="#dedede" stroke-width="1"/><path d="M87.2 493.8q0-1.4 1.4-1.4h9.2q1.4 0 1.4 1.4v7q0 2.4-6 2.4t-6-2.4z" fill="url(#bodyg)" stroke="#868686" stroke-width="0.9"/><path d="M84.20 504.3l2.3 -1.6M89.23 504.3l2.3 -1.6M94.26 504.3l2.3 -1.6M99.29 504.3l2.3 -1.6M104.32 504.3l2.3 -1.6M109.35 504.3l2.3 -1.6M114.38 504.3l2.3 -1.6M119.41 504.3l2.3 -1.6M124.44 504.3l2.3 -1.6M129.47 504.3l2.3 -1.6M134.50 504.3l2.3 -1.6M139.53 504.3l2.3 -1.6M144.56 504.3l2.3 -1.6M149.59 504.3l2.3 -1.6M154.62 504.3l2.3 -1.6" stroke="#5a7fb6" stroke-width="1.25" fill="none"/><rect x="63.4" y="510" width="95.6" height="16.5" fill="#f0f0f0" fill-opacity="0.94"/><path d="M65.8 518.2Q72.5 509.80000000000007 79.2 518.2Q72.5 526.6 65.8 518.2z" fill="#8b8b8b"/><circle cx="72.5" cy="518.2" r="2.1" fill="none" stroke="#dedede" stroke-width="1"/><path d="M87.2 513.8q0-1.4 1.4-1.4h9.2q1.4 0 1.4 1.4v7q0 2.4-6 2.4t-6-2.4z" fill="url(#bodyg)" stroke="#868686" stroke-width="0.9"/><path d="M84.20 524.3l2.3 -1.6M89.23 524.3l2.3 -1.6M94.26 524.3l2.3 -1.6M99.29 524.3l2.3 -1.6M104.32 524.3l2.3 -1.6M109.35 524.3l2.3 -1.6M114.38 524.3l2.3 -1.6M119.41 524.3l2.3 -1.6M124.44 524.3l2.3 -1.6M129.47 524.3l2.3 -1.6M134.50 524.3l2.3 -1.6M139.53 524.3l2.3 -1.6M144.56 524.3l2.3 -1.6M149.59 524.3l2.3 -1.6M154.62 524.3l2.3 -1.6" stroke="#5a7fb6" stroke-width="1.25" fill="none"/><rect x="63.4" y="530" width="95.6" height="16.5" fill="#f0f0f0" fill-opacity="0.94"/><path d="M65.8 538.2Q72.5 529.8000000000001 79.2 538.2Q72.5 546.6 65.8 538.2z" fill="#8b8b8b"/><circle cx="72.5" cy="538.2" r="2.1" fill="none" stroke="#dedede" stroke-width="1"/><path d="M87.2 533.8q0-1.4 1.4-1.4h9.2q1.4 0 1.4 1.4v7q0 2.4-6 2.4t-6-2.4z" fill="url(#bodyg)" stroke="#868686" stroke-width="0.9"/><path d="M84.20 544.3l2.3 -1.6M89.23 544.3l2.3 -1.6M94.26 544.3l2.3 -1.6M99.29 544.3l2.3 -1.6M104.32 544.3l2.3 -1.6M109.35 544.3l2.3 -1.6M114.38 544.3l2.3 -1.6M119.41 544.3l2.3 -1.6M124.44 544.3l2.3 -1.6M129.47 544.3l2.3 -1.6M134.50 544.3l2.3 -1.6M139.53 544.3l2.3 -1.6M144.56 544.3l2.3 -1.6M149.59 544.3l2.3 -1.6M154.62 544.3l2.3 -1.6" stroke="#5a7fb6" stroke-width="1.25" fill="none"/><rect x="63.4" y="550" width="95.6" height="16.5" fill="#f0f0f0" fill-opacity="0.94"/><path d="M65.8 558.2Q72.5 549.8000000000001 79.2 558.2Q72.5 566.6 65.8 558.2z" fill="#8b8b8b"/><circle cx="72.5" cy="558.2" r="2.1" fill="none" stroke="#dedede" stroke-width="1"/><path d="M87.2 553.8q0-1.4 1.4-1.4h9.2q1.4 0 1.4 1.4v7q0 2.4-6 2.4t-6-2.4z" fill="url(#bodyg)" stroke="#868686" stroke-width="0.9"/><rect x="63.4" y="570" width="95.6" height="16.5" fill="#f0f0f0" fill-opacity="0.94"/><path d="M65.8 578.2Q72.5 569.8000000000001 79.2 578.2Q72.5 586.6 65.8 578.2z" fill="#8b8b8b"/><circle cx="72.5" cy="578.2" r="2.1" fill="none" stroke="#dedede" stroke-width="1"/><path d="M87.2 573.8q0-1.4 1.4-1.4h9.2q1.4 0 1.4 1.4v7q0 2.4-6 2.4t-6-2.4z" fill="url(#bodyg)" stroke="#868686" stroke-width="0.9"/><rect x="63.4" y="590" width="95.6" height="16.5" fill="#f0f0f0" fill-opacity="0.94"/><path d="M65.8 598.2Q72.5 589.8000000000001 79.2 598.2Q72.5 606.6 65.8 598.2z" fill="#8b8b8b"/><circle cx="72.5" cy="598.2" r="2.1" fill="none" stroke="#dedede" stroke-width="1"/><path d="M87.2 593.8q0-1.4 1.4-1.4h9.2q1.4 0 1.4 1.4v7q0 2.4-6 2.4t-6-2.4z" fill="url(#bodyg)" stroke="#868686" stroke-width="0.9"/><rect x="63.4" y="610" width="95.6" height="16.5" fill="#f0f0f0" fill-opacity="0.94"/><path d="M65.8 618.2Q72.5 609.8000000000001 79.2 618.2Q72.5 626.6 65.8 618.2z" fill="#8b8b8b"/><circle cx="72.5" cy="618.2" r="2.1" fill="none" stroke="#dedede" stroke-width="1"/><path d="M87.2 613.8q0-1.4 1.4-1.4h9.2q1.4 0 1.4 1.4v7q0 2.4-6 2.4t-6-2.4z" fill="url(#bodyg)" stroke="#868686" stroke-width="0.9"/><rect x="48" y="630" width="99" height="16.5" fill="#f0f0f0" fill-opacity="0.94"/><path d="M34.6 633.8v8.4l4.8-4.2z" fill="#fff" stroke="#444" stroke-width="0.9" stroke-linejoin="round"/><path d="M51.2 638.2Q57.6 631.0 64.0 638.2Q57.6 645.4000000000001 51.2 638.2z" fill="#dadada"/><circle cx="57.6" cy="638.2" r="2.3" fill="none" stroke="#ececec" stroke-width="0.9"/><path d="M52.0 632.8000000000001L63.2 643.4000000000001" stroke="#f1f1f1" stroke-width="2.4"/><path d="M52.4 633.4000000000001L62.800000000000004 643.0" stroke="#dadada" stroke-width="1"/><path d="M71.6 633h5l1 1.4h7.4v8.6h-13.4z" fill="#8e8e8e"/><path d="M71.6 635.2h13.4" stroke="#d8d8d8" stroke-width="0.5"/><rect x="48" y="650" width="95.6" height="16.5" fill="#f0f0f0" fill-opacity="0.94"/><path d="M34.6 653.8v8.4l4.8-4.2z" fill="#fff" stroke="#444" stroke-width="0.9" stroke-linejoin="round"/><path d="M51.2 658.2Q57.6 651.0 64.0 658.2Q57.6 665.4000000000001 51.2 658.2z" fill="#dadada"/><circle cx="57.6" cy="658.2" r="2.3" fill="none" stroke="#ececec" stroke-width="0.9"/><path d="M52.0 652.8000000000001L63.2 663.4000000000001" stroke="#f1f1f1" stroke-width="2.4"/><path d="M52.4 653.4000000000001L62.800000000000004 663.0" stroke="#dadada" stroke-width="1"/><path d="M71.6 653h5l1 1.4h7.4v8.6h-13.4z" fill="#8e8e8e"/><path d="M71.6 655.2h13.4" stroke="#d8d8d8" stroke-width="0.5"/></svg>
<span class="t" style="left:24.60px;top:130.20px;font-size:9.8px;line-height:9.8px;color:#4a4a4a;transform:scaleX(0.8097);">BROWSER</span>
<span class="t" style="left:24.60px;top:689.30px;font-size:9.8px;line-height:9.8px;color:#4a4a4a;transform:scaleX(0.8922);">COMMENTS</span>
<span class="t" style="left:111.90px;top:153.12px;font-size:9.9px;line-height:9.9px;color:#3d3d3d;transform:scaleX(0.9723);">Body131</span>
<span class="t" style="left:111.90px;top:173.12px;font-size:9.9px;line-height:9.9px;color:#3d3d3d;transform:scaleX(0.9723);">Body132</span>
<span class="t" style="left:111.90px;top:193.12px;font-size:9.9px;line-height:9.9px;color:#3d3d3d;transform:scaleX(0.9723);">Body156</span>
<span class="t" style="left:111.90px;top:213.12px;font-size:9.9px;line-height:9.9px;color:#3d3d3d;transform:scaleX(0.9723);">Body165</span>
<span class="t" style="left:111.90px;top:233.12px;font-size:9.9px;line-height:9.9px;color:#3d3d3d;transform:scaleX(0.9723);">Body166</span>
<span class="t" style="left:111.90px;top:253.12px;font-size:9.9px;line-height:9.9px;color:#3d3d3d;transform:scaleX(0.9723);">Body168</span>
<span class="t" style="left:111.90px;top:273.12px;font-size:9.9px;line-height:9.9px;color:#3d3d3d;transform:scaleX(0.9723);">Body174</span>
<span class="t" style="left:111.90px;top:293.12px;font-size:9.9px;line-height:9.9px;color:#3d3d3d;transform:scaleX(0.9723);">Body194</span>
<span class="t" style="left:111.90px;top:313.12px;font-size:9.9px;line-height:9.9px;color:#3d3d3d;transform:scaleX(0.9723);">Body207</span>
<span class="t" style="left:111.90px;top:333.12px;font-size:9.9px;line-height:9.9px;color:#3d3d3d;transform:scaleX(0.9723);">Body216</span>
<span class="t" style="left:111.90px;top:353.12px;font-size:9.9px;line-height:9.9px;color:#3d3d3d;transform:scaleX(0.9723);">Body222</span>
<span class="t" style="left:111.90px;top:373.12px;font-size:9.9px;line-height:9.9px;color:#3d3d3d;transform:scaleX(0.9723);">Body223</span>
<span class="t" style="left:111.90px;top:393.12px;font-size:9.9px;line-height:9.9px;color:#3d3d3d;transform:scaleX(0.9723);">Body224</span>
<span class="t" style="left:111.90px;top:413.12px;font-size:9.9px;line-height:9.9px;color:#3d3d3d;transform:scaleX(0.9723);">Body225</span>
<span class="t" style="left:111.90px;top:433.12px;font-size:9.9px;line-height:9.9px;color:#3d3d3d;transform:scaleX(0.9723);">Body257</span>
<span class="t" style="left:111.90px;top:453.12px;font-size:9.9px;line-height:9.9px;color:#3d3d3d;transform:scaleX(0.9723);">Body261</span>
<span class="t" style="left:111.90px;top:473.12px;font-size:9.9px;line-height:9.9px;color:#3d3d3d;transform:scaleX(0.9723);">Body265</span>
<span class="t" style="left:111.90px;top:493.12px;font-size:9.9px;line-height:9.9px;color:#3d3d3d;transform:scaleX(0.9723);">Body266</span>
<span class="t" style="left:111.90px;top:513.12px;font-size:9.9px;line-height:9.9px;color:#3d3d3d;transform:scaleX(0.9723);">Body267</span>
<span class="t" style="left:111.90px;top:533.12px;font-size:9.9px;line-height:9.9px;color:#3d3d3d;transform:scaleX(0.9723);">Body268</span>
<span class="t" style="left:111.90px;top:553.12px;font-size:9.9px;line-height:9.9px;color:#3d3d3d;transform:scaleX(0.9723);">Body271</span>
<span class="t" style="left:111.90px;top:573.12px;font-size:9.9px;line-height:9.9px;color:#3d3d3d;transform:scaleX(0.9723);">Body272</span>
<span class="t" style="left:111.90px;top:593.12px;font-size:9.9px;line-height:9.9px;color:#3d3d3d;transform:scaleX(0.9723);">Body273</span>
<span class="t" style="left:111.90px;top:613.12px;font-size:9.9px;line-height:9.9px;color:#3d3d3d;transform:scaleX(0.9723);">Body274</span>
<span class="t" style="left:96.60px;top:633.12px;font-size:9.9px;line-height:9.9px;color:#3d3d3d;transform:scaleX(0.9222);">Canvases</span>
<span class="t" style="left:96.60px;top:653.12px;font-size:9.9px;line-height:9.9px;color:#3d3d3d;transform:scaleX(0.9479);">Sketches</span>
<svg class="abs" style="left:495px;top:680px" width="210" height="30" viewBox="495 680 210 30"><defs><linearGradient id="navg" x1="0" y1="0" x2="0" y2="1"><stop offset="0" stop-color="#cbcbcb"/><stop offset="1" stop-color="#7786a0"/></linearGradient></defs><rect x="501.3" y="685" width="197" height="20" fill="#f0f0f0" fill-opacity="0.96"/><ellipse cx="510.2" cy="694.6" rx="6.3" ry="2.9" fill="#fff" stroke="#7a7a7a" stroke-width="0.9"/><ellipse cx="510.2" cy="694.6" rx="3.1" ry="6.3" fill="none" stroke="#7a7a7a" stroke-width="0.9" transform="rotate(-8 510.2 694.6)"/><circle cx="510.2" cy="694.6" r="1.1" fill="#2a8ee0"/><path d="M512.2 690.0l1.8 .6-1 1.4zM514.2 692.0l1.8 .9-1.3 1z" fill="#333"/><path d="M521 693.1h4.9l-2.45 3.3z" fill="#222"/><path d="M613.3 693.1h4.9l-2.45 3.3z" fill="#222"/><path d="M638.5 693.1h4.9l-2.45 3.3z" fill="#222"/><path d="M664.2 693.1h4.9l-2.45 3.3z" fill="#222"/><path d="M690.1 693.1h4.9l-2.45 3.3z" fill="#222"/><path d="M533.2 691.2l1.4-1.8h2l.8 1h1.6l1-1.4h1.4l.8 2.2z" fill="#8a8e99"/><rect x="531.6" y="691" width="12" height="9.4" rx="1.2" fill="#8a8e99"/><rect x="533.4" y="693.6" width="8.4" height="4.6" rx="0.8" fill="#b6bccb" stroke="#767a86" stroke-width="0.6"/><path d="M556.4 695v-4.6q0-.8.7-.8t.7.8v-1.4q0-.8.75-.8t.75.8v-.2q0-.8.75-.8t.75.8v1q0-.8.7-.8t.7.8v2.2q0-.7.65-.7t.65.8v3.900q0 1.800-.8 3.000l-.6 1.700h-5.200l-.8-1.800-2.400-2.700q-.7-.8-.1-1.300t1.500.1z" fill="#fff" stroke="#707070" stroke-width="0.75" stroke-linejoin="round"/><path d="M557.8 694.4v-4M559.3 694v-5M560.8 694v-5M562.2 694.4v-4" stroke="#8a8a8a" stroke-width="0.5"/><path d="M581.6 695.400l4.8 4.800" stroke="#3a3a3a" stroke-width="1.9" stroke-linecap="round"/><circle cx="578.6" cy="692.3" r="4.3" fill="#eef4f4" stroke="#7f8c8c" stroke-width="1.1"/><path d="M584.6 689.8h2.4M585.8 688.6v2.400M584.8 692.4h2.200" stroke="#333" stroke-width="0.7"/><path d="M603.300 696l4.900 4.700" stroke="#3a3a3a" stroke-width="1.9" stroke-linecap="round"/><circle cx="600.3" cy="692.9" r="4.500" fill="#f2f2f2" stroke="#8a9595" stroke-width="1.1"/><rect x="597.8" y="690.600" width="5.200" height="4.800" fill="#e8e8ee" stroke="#8a8a8a" stroke-width="0.7"/><rect x="623.6" y="688" width="13.1" height="10.6" rx="1" fill="#9c9c9c"/><rect x="625.1" y="689.5" width="10.1" height="7.4" fill="#9fc0ea"/><path d="M628.6 698.6h3.200l.6 1.700h-4.400z" fill="#aaa"/><rect x="626.400" y="700.2" width="7.600" height="0.9" fill="#8a8a8a"/><rect x="649.3" y="688" width="12.6" height="13" rx="0.8" fill="url(#navg)"/><path d="M652.4 688v13M655.6 688v13M658.8 688v13M649.3 691.2h12.600M649.3 694.5h12.600M649.3 697.800h12.600" stroke="#e4e4e4" stroke-width="0.45" fill="none"/><rect x="675.2" y="689.500" width="12.800" height="10.700" rx="1" fill="#789fd4"/><path d="M681.600 689.500v10.700M675.200 694.800h12.800" stroke="#a9c4ea" stroke-width="0.9"/></svg>
<div class="abs" style="left:0;top:0;width:1200px;height:26.5px;background:#d2d2d2"></div>
<div class="abs" style="left:163px;top:3px;width:263.5px;height:24px;background:#c2c2c2;border-radius:5px 5px 0 0"></div>
<div class="abs" style="left:429.5px;top:3px;width:264px;height:24px;background:#f3f3f3;border-radius:5px 5px 0 0"></div>
<div class="abs" style="left:696px;top:3px;width:263.5px;height:24px;background:#c2c2c2;border-radius:5px 5px 0 0"></div>
<div class="abs" style="left:962.5px;top:3px;width:23px;height:24px;background:#c2c2c2;border-radius:4px 4px 0 0"></div>
<span class="t" style="left:278.00px;top:9.66px;font-size:10.8px;line-height:10.8px;color:#747474;transform:scaleX(1.0514);">Untitled</span>
<span class="t" style="left:498.00px;top:9.66px;font-size:10.8px;line-height:10.8px;color:#3a3a3a;transform:scaleX(1.0080);">Untitled (v9~recovered)*(1)</span>
<span class="t" style="left:782.00px;top:9.66px;font-size:10.8px;line-height:10.8px;color:#747474;transform:scaleX(0.9893);">cap (v3~recovered)*</span>
<span class="t" style="left:1012.50px;top:8.16px;font-size:10.8px;line-height:10.8px;color:#3f3f3f;transform:scaleX(0.9607);">10 of 10</span>
<span class="t" style="left:1087.00px;top:8.16px;font-size:10.8px;line-height:10.8px;color:#3f3f3f;transform:scaleX(0.7492);">1</span>
<div class="abs" style="left:1170.5px;top:2.5px;width:21px;height:21px;border-radius:50%;background:#f4f4f4"></div>
<span class="t" style="left:1174.50px;top:8.16px;font-size:10.8px;line-height:10.8px;color:#3a3a3a;transform:scaleX(0.9370);">AS</span>
<svg class="abs" style="left:0;top:0" width="1200" height="27" viewBox="0 0 1200 27"><rect x="7.3" y="7.3" width="3.1" height="3.1" rx="0.4" fill="#676767"/><rect x="11.7" y="7.3" width="3.1" height="3.1" rx="0.4" fill="#676767"/><rect x="16.1" y="7.3" width="3.1" height="3.1" rx="0.4" fill="#676767"/><rect x="7.3" y="11.6" width="3.1" height="3.1" rx="0.4" fill="#676767"/><rect x="11.7" y="11.6" width="3.1" height="3.1" rx="0.4" fill="#676767"/><rect x="16.1" y="11.6" width="3.1" height="3.1" rx="0.4" fill="#676767"/><rect x="7.3" y="15.9" width="3.1" height="3.1" rx="0.4" fill="#676767"/><rect x="11.7" y="15.9" width="3.1" height="3.1" rx="0.4" fill="#676767"/><rect x="16.1" y="15.9" width="3.1" height="3.1" rx="0.4" fill="#676767"/><path d="M35.6 7.2h6.6l3.9 3.9v8.2q0 .6-.6.6h-9.9q-.6 0-.6-.6v-11.5q0-.6.6-.6z" fill="#676767"/><path d="M42.4 7.4v3.5h3.5z" fill="#d2d2d2"/><path d="M51.2 11.2h5.6l-2.8 3.4z" fill="#676767"/><path d="M73 7.4h8.6l2.4 2.4v8.4q0 .8-.8.8h-10.2q-.8 0-.8-.8v-10q0-.8.8-.8z" fill="#676767"/><rect x="74.6" y="8.2" width="6.6" height="3.4" fill="#d2d2d2"/><rect x="78.4" y="8.6" width="1.7" height="2.6" fill="#676767"/><rect x="75" y="14.2" width="6.2" height="4.8" fill="#d2d2d2"/><rect x="76.2" y="15.4" width="3.8" height="3.6" fill="#676767"/><path d="M105.6 8.6L101.6 12.6L105.6 16.4" fill="none" stroke="#676767" stroke-width="1.5" stroke-linejoin="miter"/><path d="M102 12.6h4.4q4.2 0 4.2 5.2" fill="none" stroke="#676767" stroke-width="1.5"/><path d="M117 11.2h5.6l-2.8 3.4z" fill="#676767"/><path d="M138.6 8.6L142.6 12.6L138.6 16.4" fill="none" stroke="#a0a0a0" stroke-width="1.5"/><path d="M142.2 12.6h-4.4q-4.2 0 -4.2 5.2" fill="none" stroke="#a0a0a0" stroke-width="1.5"/><path d="M148.4 11.2h5.4l-2.7 3.3z" fill="#b4b4b4"/><rect x="262.4" y="13.4" width="9.4" height="7.2" rx="1" fill="#8c8c8c"/><path d="M264.4 13.4v-1.6a2.7 2.7 0 0 1 5.4 0v1.6" fill="none" stroke="#8c8c8c" stroke-width="1.4"/><path d="M263 15.8h8.2M263 18.2h8.2" stroke="#bcbcbc" stroke-width="0.7"/><path d="M413.20000000000005 11.799999999999999L420.0 18.599999999999998M420.0 11.799999999999999L413.20000000000005 18.599999999999998" stroke="#6e6e6e" stroke-width="1.1" fill="none"/><path d="M679.8000000000001 11.799999999999999L686.6 18.599999999999998M686.6 11.799999999999999L679.8000000000001 18.599999999999998" stroke="#4a4a4a" stroke-width="1.1" fill="none"/><path d="M946.8000000000001 11.799999999999999L953.6 18.599999999999998M953.6 11.799999999999999L946.8000000000001 18.599999999999998" stroke="#6e6e6e" stroke-width="1.1" fill="none"/><path d="M481.4 10.799999999999999L488.59999999999997 8.2L495.4 10.399999999999999L495.4 17.6L488.4 21.2L481.4 17.799999999999997z" fill="#666"/><path d="M482.4 11.799999999999999L488.0 13.0L488.0 19.6L482.4 17.2z" fill="#c4c4c4"/><path d="M481.4 10.799999999999999L488.59999999999997 8.2L495.4 10.399999999999999L488.4 12.399999999999999z" fill="#4c4c4c"/><path d="M764.6 10.799999999999999L771.8000000000001 8.2L778.6 10.399999999999999L778.6 17.6L771.6 21.2L764.6 17.799999999999997z" fill="#9a9a9a"/><path d="M765.6 11.799999999999999L771.2 13.0L771.2 19.6L765.6 17.2z" fill="#cfcfcf"/><path d="M764.6 10.799999999999999L771.8000000000001 8.2L778.6 10.399999999999999L771.6 12.399999999999999z" fill="#8a8a8a"/><path d="M968.8 15h11M974.3 9.5v11" stroke="#7a7a7a" stroke-width="1.7"/><path d="M996.2 7.2h6.2l3.6 3.6v2.2l-5 5v2h-4.8z" fill="#5a5a5a"/><path d="M1002 18.8l5.4-5.4 1.6 1.6-5.4 5.4-2.2.6z" fill="#5a5a5a" stroke="#d2d2d2" stroke-width="0.6"/><circle cx="1076.6" cy="13.4" r="5.9" fill="#5c5c5c" stroke="#5c5c5c" stroke-width="0"/><circle cx="1076.6" cy="13.4" r="6.6" fill="none" stroke="#5c5c5c" stroke-width="1"/><circle cx="1076.6" cy="13.4" r="5.2" fill="none" stroke="#d2d2d2" stroke-width="0.8"/><path d="M1076.8 9.8v3.8h3.2" stroke="#e0e0e0" stroke-width="1.2" fill="none"/><path d="M1121 8.2q-3.6 .6-3.6 5v2.8l-1.8 2h10.8l-1.8-2v-2.8q0-4.4-3.6-5z" fill="#5c5c5c"/><circle cx="1121" cy="19.4" r="1.4" fill="#5c5c5c"/><circle cx="1124.6" cy="9.6" r="2.5" fill="#0c96e0"/><circle cx="1148.6" cy="13.4" r="6.7" fill="#5c5c5c"/></svg>
<span class="t" style="left:1145.40px;top:7.67px;font-size:11.5px;line-height:11.5px;color:#d8d8d8;font-weight:bold;transform:scaleX(0.9111);">?</span>
<div class="abs" style="left:0;top:26.5px;width:1200px;height:68px;background:#f3f3f3"></div>
<div class="abs" style="left:9.6px;top:35.3px;width:91px;height:50.5px;border:1px solid #d9d9d9;border-radius:3.5px;background:#f3f3f3"></div>
<span class="t" style="left:34.60px;top:55.77px;font-size:9.6px;line-height:9.6px;color:#3a3a3a;font-weight:bold;transform:scaleX(0.9183);">DESIGN</span>
<span class="t" style="left:125.00px;top:31.09px;font-size:9.7px;line-height:9.7px;color:#1d8fd8;transform:scaleX(0.9000);">SOLID</span>
<div class="abs" style="left:115.4px;top:43.6px;width:46.8px;height:2.4px;background:#0696d7;border-radius:1px"></div>
<span class="t" style="left:190.00px;top:31.09px;font-size:9.7px;line-height:9.7px;color:#3c3c3c;transform:scaleX(0.8600);">SURFACE</span>
<span class="t" style="left:267.40px;top:31.09px;font-size:9.7px;line-height:9.7px;color:#3c3c3c;transform:scaleX(0.9025);">SHEET METAL</span>
<span class="t" style="left:366.40px;top:31.09px;font-size:9.7px;line-height:9.7px;color:#3c3c3c;transform:scaleX(0.8928);">TOOLS</span>
<span class="t" style="left:194.00px;top:81.19px;font-size:9.7px;line-height:9.7px;color:#383838;transform:scaleX(0.8854);">CREATE</span>
<span class="t" style="left:418.20px;top:81.19px;font-size:9.7px;line-height:9.7px;color:#383838;transform:scaleX(0.8961);">MODIFY</span>
<span class="t" style="left:567.00px;top:81.19px;font-size:9.7px;line-height:9.7px;color:#383838;transform:scaleX(0.8338);">ASSEMBLE</span>
<span class="t" style="left:645.80px;top:81.19px;font-size:9.7px;line-height:9.7px;color:#383838;transform:scaleX(0.9000);">CONSTRUCT</span>
<span class="t" style="left:738.00px;top:81.19px;font-size:9.7px;line-height:9.7px;color:#383838;transform:scaleX(0.8516);">INSPECT</span>
<span class="t" style="left:812.80px;top:81.19px;font-size:9.7px;line-height:9.7px;color:#383838;transform:scaleX(0.8532);">INSERT</span>
<span class="t" style="left:874.80px;top:81.19px;font-size:9.7px;line-height:9.7px;color:#383838;transform:scaleX(0.8162);">SELECT</span>
<svg class="abs" style="left:0;top:26px" width="1200" height="69" viewBox="0 26 1200 69"><path d="M231.0 84.7h5.0l-2.5 3.3z" fill="#2e2e2e"/><path d="M454.8 84.7h5.0l-2.5 3.3z" fill="#2e2e2e"/><path d="M613.8 84.7h5.0l-2.5 3.3z" fill="#2e2e2e"/><path d="M703.8 84.7h5.0l-2.5 3.3z" fill="#2e2e2e"/><path d="M777.1999999999999 84.7h5.0l-2.5 3.3z" fill="#2e2e2e"/><path d="M846.8 84.7h5.0l-2.5 3.3z" fill="#2e2e2e"/><path d="M909.4 84.7h5.0l-2.5 3.3z" fill="#2e2e2e"/><path d="M72.8 59.1h4.9l-2.45 3.4z" fill="#2e2e2e"/><rect x="327.5" y="49" width="1" height="42" fill="#d3d3d3"/><rect x="551.9" y="49" width="1" height="42" fill="#d3d3d3"/><rect x="632.7" y="49" width="1" height="42" fill="#d3d3d3"/><rect x="719.3" y="49" width="1" height="42" fill="#d3d3d3"/><rect x="799.7" y="49" width="1" height="42" fill="#d3d3d3"/><rect x="861.9" y="49" width="1" height="42" fill="#d3d3d3"/><path d="M115.3 50.6H138V61M115.3 50.6V73.2H128.5" stroke="#8a8a8a" stroke-width="0.9" fill="none"/><path d="M121.3 55.8H132.3M121.3 55.8V67" stroke="#8a8a8a" stroke-width="0.9" fill="none" stroke-dasharray="2.2 1"/><path d="M132.3 55.8Q132 66.5 121.3 67" stroke="#555" stroke-width="0.9" fill="none"/><rect x="114.2" y="49.5" width="2.2" height="2.2" fill="#444"/><rect x="136.9" y="49.5" width="2.2" height="2.2" fill="#444"/><rect x="114.2" y="72.10000000000001" width="2.2" height="2.2" fill="#444"/><rect x="120.2" y="54.699999999999996" width="2.2" height="2.2" fill="#444"/><rect x="131.20000000000002" y="54.699999999999996" width="2.2" height="2.2" fill="#444"/><rect x="120.2" y="65.9" width="2.2" height="2.2" fill="#444"/><path d="M129 68.4h4.200v-4.100h3.200v4.100h4.200v3.200h-4.200v4.100h-3.200v-4.100h-4.200z" fill="#2ea84b"/><path d="M151.2 54.4l5 -5h15.2l-5 5z" fill="#86c8fa"/><path d="M166.39999999999998 54.4l5 -5v17.4l-5 5z" fill="#4690d2"/><rect x="151.2" y="54.4" width="15.2" height="17.4" fill="#66ade6"/><path d="M151.2 71.800h15.200l5-5v3.800l-5 5h-15.200z" fill="#b2b2b2"/><rect x="151.2" y="71.800" width="15.200" height="3.800" fill="#cdcdcd"/><path d="M174.2 52.5V70.6" stroke="#333" stroke-width="1"/><path d="M174.2 50.200l1.700 3.200h-3.400z" fill="#222"/><path d="M185.600 63Q190 57.500 197 56.200T209 60l3.500 1.800v9.200l-4.800 2.200Q202 67.500 196.500 68.200T190.500 72.800L185.600 70z" fill="#66ade6"/><path d="M185.600 63Q190 57.500 197 56.200T209 60l3.500 1.800l-4.600 2.200Q203 60 197 61T190.500 65.800z" fill="#86c8fa"/><path d="M185.600 63l4.900 2.800v7l-4.900-2.800z" fill="#4690d2"/><path d="M207.900 64l4.600-2.200v9.200l-4.600 2.200z" fill="#f4f4f4" stroke="#6a6a6a" stroke-width="0.8"/><path d="M188.400 54.400Q199 47 210.600 55.400" stroke="#333" stroke-width="0.9" fill="none"/><path d="M186.300 55.800l3.600-2.800l.4 2.800z" fill="#222"/><path d="M221.6 54.6l5.6 -5.2h21.4l-5.6 5.2z" fill="#ececec" stroke="#808080" stroke-width="0.9" stroke-linejoin="round"/><path d="M243.0 54.6l5.6 -5.2v21l-5.6 5.2z" fill="#bcbcbc" stroke="#808080" stroke-width="0.9" stroke-linejoin="round"/><rect x="221.6" y="54.6" width="21.4" height="21" fill="#dfdfdf" stroke="#808080" stroke-width="0.9" stroke-linejoin="round"/><circle cx="232.400" cy="65.200" r="6.800" fill="#f2f2f2" stroke="#555" stroke-width="0.9"/><circle cx="232.400" cy="65.600" r="5.200" fill="#5ea6e2" stroke="#3f86c8" stroke-width="0.6"/><path d="M232.600 60.200a5.200 5.200 0 0 1 5 5.400q-4.600-.2-5-5.400z" fill="#f4f4f4"/><path d="M263 54H275.400M260 57.200V68M263 71H275.400" stroke="#8a8a8a" stroke-width="1" fill="none"/><rect x="257.400" y="51.400" width="5.400" height="5.400" fill="#fff" stroke="#777" stroke-width="0.8"/><rect x="275" y="51" width="6.200" height="6.200" fill="#5ea8e6"/><rect x="257" y="68" width="6.200" height="6.200" fill="#5ea8e6"/><rect x="275" y="68" width="6.200" height="6.200" fill="#5ea8e6"/><path d="M299.800 51H309.600Q313.600 51 315.200 53L319.200 59.600V67.600Q319.200 70.600 317 72.200L313 75Q311.600 76 309.200 76H299.600Q293.600 76 293.600 70V57.200Q293.600 51 299.800 51z" fill="#a47ce4"/><path d="M300 55H307.600Q313 55 313 60.400V70.200Q313 75.400 308 75.400H300Q294.200 75.400 294.200 69.600V60.800Q294.200 55 300 55z" fill="#b58ff0"/><path d="M313 60l6-2.600v10.200q0 3-2.200 4.600l-3.800 2.800z" fill="#8a5fcc"/><path d="M303.600 51.400V75.600M294 64.600Q304 67.400 313 64.600" stroke="#8d64cf" stroke-width="0.8" fill="none"/><path d="M299.800 51H309.600Q313.600 51 315.200 53L319.200 59.600V67.600Q319.200 70.600 317 72.200L313 75Q311.600 76 309.200 76H299.600Q293.600 76 293.600 70V57.200Q293.600 51 299.800 51z" fill="none" stroke="#c9aef5" stroke-width="0.9"/><path d="M312.80 49.60L313.87 53.41L317.33 51.47L315.39 54.93L319.20 56.00L315.39 57.07L317.33 60.53L313.87 58.59L312.80 62.40L311.73 58.59L308.27 60.53L310.21 57.07L306.40 56.00L310.21 54.93L308.27 51.47L311.73 53.41z" fill="#f7a30c"/><path d="M339.800 54.600L344.600 49.400H350V75.600H339.800z" fill="#dedede" stroke="#808080" stroke-width="0.9" stroke-linejoin="round"/><path d="M345.400 52.400L351.400 49.400H357.200V70.600L351.400 76H345.400z" fill="#4690d2"/><path d="M345.400 52.400L351.400 49.400H357.200L351.600 52.400z" fill="#86c8fa"/><rect x="345.400" y="52.400" width="6.200" height="23.600" fill="#66ade6"/><path d="M356 62.200H360.600" stroke="#666" stroke-width="1.5"/><path d="M363.400 62.200l-3.800-2.300v4.600z" fill="#222"/><path d="M374.400 54.800L380 49.600H389Q401 52 400.800 63.400V70.400L395 75.600H374.400z" fill="#dedede" stroke="#808080" stroke-width="0.9" stroke-linejoin="round"/><path d="M395 75.600L400.800 70.400V63.400L395 67.200z" fill="#bcbcbc" stroke="#808080" stroke-width="0.6"/><path d="M384.200 53.400L389.600 49.400Q401.400 51.800 401 63.600L395.400 67.200Q395.600 55.800 384.200 53.400z" fill="#66ade6"/><path d="M374.400 54.800H381Q395 55 395 67.200V75.600" fill="none" stroke="#9a9a9a" stroke-width="0.7"/><path d="M410.4 54.6l5.6 -5.2h21l-5.6 5.2z" fill="#ececec" stroke="#808080" stroke-width="0.9" stroke-linejoin="round"/><path d="M431.4 54.6l5.6 -5.2v21l-5.6 5.2z" fill="#bcbcbc" stroke="#808080" stroke-width="0.9" stroke-linejoin="round"/><rect x="410.4" y="54.6" width="21" height="21" fill="#dfdfdf" stroke="#808080" stroke-width="0.9" stroke-linejoin="round"/><rect x="413.800" y="59" width="13.200" height="13.400" fill="#f4f4f4"/><path d="M413.800 59H419.600V66.600H427V72.400H413.800z" fill="#4690d2"/><path d="M419.600 66.600H427V72.400H414.600z" fill="#86c8fa"/><path d="M413.800 59H419.600V66.600L414.600 72.400H413.800z" fill="#4690d2"/><path d="M455.6 54l4.6 -4.6h12.4l-4.6 4.6z" fill="#86c8fa"/><path d="M468.0 54l4.6 -4.6v12.6l-4.6 4.6z" fill="#4690d2"/><rect x="455.6" y="54" width="12.4" height="12.6" fill="#66ade6"/><path d="M446.2 62.6l4.6 -4.6h12.4l-4.6 4.6z" fill="#86c8fa"/><path d="M458.59999999999997 62.6l4.6 -4.6v13l-4.6 4.6z" fill="#4690d2"/><rect x="446.2" y="62.6" width="12.4" height="13" fill="#66ade6"/><path d="M482.6 54l5.2 -4.6h19.6l-5.2 4.6z" fill="#86c8fa"/><path d="M502.20000000000005 54l5.2 -4.6v7.8l-5.2 4.6z" fill="#4690d2"/><rect x="482.6" y="54" width="19.6" height="7.8" fill="#66ade6"/><path d="M482.6 65.8l5.2 -4.6h19.6l-5.2 4.6z" fill="#eee" stroke="#8a8a8a" stroke-width="0.8" stroke-linejoin="round"/><path d="M502.20000000000005 65.8l5.2 -4.6v8.8l-5.2 4.6z" fill="#bdbdbd" stroke="#8a8a8a" stroke-width="0.8" stroke-linejoin="round"/><rect x="482.6" y="65.8" width="19.6" height="8.8" fill="#dedede" stroke="#8a8a8a" stroke-width="0.8" stroke-linejoin="round"/><path d="M481.200 64.200H503L508.800 58.600" stroke="#3f9ae8" stroke-width="1" fill="none"/><path d="M530.8 53.4V71.60000000000001M521.6999999999999 62.5H539.9" stroke="#2a2a2a" stroke-width="2.0" fill="none"/><path d="M530.8 49.3l4.3 4.6h-8.6zM530.8 75.7l4.3 -4.6h-8.6zM517.5999999999999 62.5l4.6 -4.3v8.6zM544.0 62.5l-4.6 -4.3v8.6z" fill="#2a2a2a"/><path d="M562.4 65l3 -2.8h10.4l-3 2.8z" fill="#ececec" stroke="#8a8a8a" stroke-width="0.7" stroke-linejoin="round"/><path d="M572.8 65l3 -2.8v10.4l-3 2.8z" fill="#bdbdbd" stroke="#8a8a8a" stroke-width="0.7" stroke-linejoin="round"/><rect x="562.4" y="65" width="10.4" height="10.4" fill="#d9d9d9" stroke="#8a8a8a" stroke-width="0.7" stroke-linejoin="round"/><path d="M573.4 65l3.6 -3.2h10.4l-3.6 3.2z" fill="#ececec" stroke="#8a8a8a" stroke-width="0.7" stroke-linejoin="round"/><path d="M583.8 65l3.6 -3.2v10.4l-3.6 3.2z" fill="#bdbdbd" stroke="#8a8a8a" stroke-width="0.7" stroke-linejoin="round"/><rect x="573.4" y="65" width="10.4" height="10.4" fill="#d9d9d9" stroke="#8a8a8a" stroke-width="0.7" stroke-linejoin="round"/><path d="M562.4 55l3.2 -3h10.8l-3.2 3z" fill="#86c8fa"/><path d="M573.1999999999999 55l3.2 -3v10l-3.2 3z" fill="#4690d2"/><rect x="562.4" y="55" width="10.8" height="10" fill="#66ade6"/><path d="M582.00 49.40L583.11 53.32L586.67 51.33L584.68 54.89L588.60 56.00L584.68 57.11L586.67 60.67L583.11 58.68L582.00 62.60L580.89 58.68L577.33 60.67L579.32 57.11L575.40 56.00L579.32 54.89L577.33 51.33L580.89 53.32z" fill="#f7a30c"/><path d="M600.600 57.400L606 50.800H609.600V60.200L605 62.600V69.600L601.600 73.400H600.600z" fill="#d9d9d9" stroke="#8a8a8a" stroke-width="0.9" stroke-linejoin="round"/><path d="M606 50.800H609.600V60.200L606.400 61.600z" fill="#bdbdbd" stroke="#8a8a8a" stroke-width="0.6"/><path d="M612.600 61V66.400L618.600 73.400H623.200V57L618.600 52.600V64.600L616.600 61.600z" fill="#d0d0d0" stroke="#8a8a8a" stroke-width="0.9" stroke-linejoin="round"/><path d="M618.600 52.600L623.200 57V73.400L618.600 68z" fill="#e4e4e4" stroke="#8a8a8a" stroke-width="0.7"/><path d="M606.800 62.600V65.800M614.800 55.600V60.600" stroke="#3f9ae8" stroke-width="1.4"/><path d="M665.400 56L671.600 49.600H679V68.400L672.400 74.600H665.400z" fill="#e0e0e0" stroke="#777" stroke-width="0.9" stroke-linejoin="round"/><path d="M672.800 56.600L680 49.800V68L672.800 74.400z" fill="#56c079"/><path d="M682.400 58L690.200 50V66L682.400 74.400z" fill="#e8975c"/><path d="M732.400 59.600H753.800" stroke="#555" stroke-width="0.9"/><path d="M731.400 55.800V63M754.800 55.800V63" stroke="#555" stroke-width="0.8"/><path d="M731.800 59.600l3.400-1.800v3.600zM754.400 59.600l-3.400-1.800v3.600z" fill="#444"/><rect x="731.200" y="64.400" width="23.800" height="4.600" fill="#f6a800"/><path d="M733.600 64.400v2M736.600 64.400v1.400M739.600 64.400v2M742.600 64.400v1.400M745.600 64.400v2M748.600 64.400v1.400M751.600 64.400v2" stroke="#a06a00" stroke-width="0.7"/><path d="M773 50.200L779.800 53.200V60.400L773.400 63.600L766.600 60.200V53.400z" fill="#efa572"/><path d="M766.600 53.400L773.200 56.600L779.800 53.200L773 50.200z" fill="#f5b98d"/><path d="M773.200 56.600V63.600" stroke="#d98a55" stroke-width="0.6"/><path d="M783.400 52L791.800 65.200L780.600 70.200L776.400 64z" fill="#4a92d2"/><path d="M783.400 52L780.600 70.200L776.400 64z" fill="#62a9e4"/><circle cx="776" cy="68.200" r="6.600" fill="#a97fe6"/><path d="M769.800 70.400a6.600 6.600 0 0 0 12.400 0a9 9 0 0 1 -12.400 0z" fill="#8f63cf"/><rect x="820" y="50" width="24" height="24" fill="#84c8fb"/><path d="M820 74V64.600Q823.600 59.600 826.400 60T832.400 66.600Q835 63.400 837 63.600T844 68.400V74z" fill="#3f8fcd"/><circle cx="837.500" cy="56.500" r="2.500" fill="#fbf3b4"/><rect x="820" y="50" width="24" height="24" fill="none" stroke="#5ea6e2" stroke-width="0.6"/><rect x="878.200" y="46.700" width="31.800" height="31.600" fill="#0696d7"/><path d="M885.200 51.400H898.400L905.600 58.400H890.800Q888.600 58.400 888.200 60.600L881.400 55.400Q882 51.400 885.200 51.400z" fill="#5fcb85"/><path d="M892 51.400L898.400 58.400" stroke="#3d9e5f" stroke-width="0.7"/><path d="M884.800 51.600Q881.200 52.600 881 58V65.200L888 71.600V61Q888 58.600 890.400 58.400z" fill="#f4f4f4" stroke="#8a8a8a" stroke-width="0.7" stroke-linejoin="round"/><path d="M881 58.800L888 65" stroke="#8a8a8a" stroke-width="0.7"/><path d="M901.400 67L906 62.600L907.200 63.800L902.600 68.200z" fill="#8e8e8e"/><path d="M893.200 73.800Q896 68.600 899.400 66.800Q902.200 68.400 901.600 70.200Q899 73.800 893.200 73.800z" fill="#a5651f"/></svg>
<div class="abs" style="left:0;top:94.5px;width:1200px;height:26.7px;background:#fcba63"></div>
<span class="t" style="left:291.00px;top:102.76px;font-size:10.8px;line-height:10.8px;color:#fff;font-weight:bold;">Fusion 360 will require macOS 10.14 or higher after our 2021 April update.</span>
<span class="t" style="left:673.60px;top:102.76px;font-size:10.8px;line-height:10.8px;color:#fff;font-weight:bold;text-decoration:underline;text-underline-offset:1.5px;">Check the Mac App Store for OS updates.</span>
<svg class="abs" style="left:1176px;top:101px" width="12" height="12" viewBox="0 0 12 12"><path d="M2.3 2.3L9.6 9.6M9.6 2.3L2.3 9.6" stroke="#fff" stroke-width="1.7" fill="none"/></svg>
<svg class="abs" style="left:0;top:708px" width="1200" height="42" viewBox="0 708 1200 42"><defs></defs><rect x="0" y="708" width="1200" height="42" fill="#f1f1f1"/><rect x="0" y="708.100" width="1200" height="1.500" fill="#d2d2d2"/><rect x="9.200" y="726.600" width="1.900" height="11.800" fill="#454547"/><path d="M19.300 726.800v11.400l-8.200-5.700z" fill="#454547"/><path d="M37.500 726.700v11.400l-8.300-5.700z" fill="#454547"/><rect x="38.500" y="730" width="1.600" height="4.800" fill="#454547"/><path d="M50.800 726v13.200l9.800-6.600z" fill="#454547"/><path d="M73.200 726.700v11.400l8.300-5.700z" fill="#454547"/><rect x="70.600" y="730" width="1.600" height="4.800" fill="#454547"/><rect x="100.900" y="726.600" width="1.900" height="11.800" fill="#454547"/><path d="M92.600 726.800v11.400l8.200-5.700z" fill="#454547"/><path d="M114 743.400h2.500M118 743.400h3.500M123.700 743.400H1149" stroke="#c6c6c6" stroke-width="1.300" fill="none"/><path d="M128.2 738.300V743.400M148.2 738.300V743.400M168.2 738.300V743.400M188.2 738.300V743.400M208.2 738.300V743.400M228.2 738.300V743.400M248.2 738.300V743.400M268.2 738.300V743.400M288.2 738.300V743.400M308.2 738.300V743.400M328.2 738.300V743.400M348.2 738.300V743.400M368.2 738.300V743.400M388.2 738.300V743.400M408.2 738.300V743.400M428.2 738.300V743.400M448.2 738.300V743.400M468.2 738.300V743.400M488.2 738.300V743.400M508.2 738.300V743.400M528.2 738.300V743.400M548.2 738.300V743.400M568.2 738.300V743.400M588.2 738.300V743.400M608.2 738.300V743.400M628.2 738.300V743.400M648.2 738.300V743.400M668.2 738.300V743.400M688.2 738.300V743.400M708.2 738.300V743.400M728.2 738.300V743.400M748.2 738.300V743.400M768.2 738.300V743.400M788.2 738.300V743.400M808.2 738.300V743.400M828.2 738.300V743.400M848.2 738.300V743.400M868.2 738.300V743.400M888.2 738.300V743.400M908.2 738.300V743.400M928.2 738.300V743.400M948.2 738.300V743.400M968.2 738.300V743.400M988.2 738.300V743.400M1008.2 738.300V743.400M1028.2 738.300V743.400M1048.2 738.300V743.400M1068.2 738.300V743.400M1088.2 738.300V743.400M1108.2 738.300V743.400M1128.2 738.300V743.400M1148.2 738.300V743.400" stroke="#c6c6c6" stroke-width="1.200" fill="none"/><rect x="158.3" y="719" width="20" height="20" rx="2.2" fill="#e5e51d"/><rect x="198.3" y="719" width="20" height="20" rx="2.2" fill="#e5e51d"/><g transform="translate(128.2 729.2)"><path d="M-6.200 -3.800L-4.600 -6.800H3.900L3.900 3.900L2.300 6.800H-6.200z" fill="#4690d2"/><path d="M-6.200 -3.800L-4.600 -6.800H3.900L2.300 -3.800z" fill="#82c6f8"/><rect x="-6.200" y="-3.800" width="8.500" height="8.300" fill="#66ade6"/><path d="M-6.200 4.500H2.300L3.900 1.700V4L2.300 6.900H-6.200z" fill="#c2c2c2"/><path d="M5.500 -5.000V4.000" stroke="#444" stroke-width="0.7"/><path d="M5.500 -6.400l1.000 2.000h-2.000z" fill="#333"/></g><g transform="translate(148.2 729.2)"><path d="M-6.400 -6.200H5.600V2M-6.400 -6.200V5.800H2.400" stroke="#c2c2c2" stroke-width="0.9" fill="none"/><path d="M-3.000 -2.800H2.200M-3.000 -2.800V2.200" stroke="#c8c8c8" stroke-width="0.8" stroke-dasharray="1 0.700" fill="none"/><path d="M2.400 -2.800Q2.000 2.200 -3.000 2.500" stroke="#555" stroke-width="0.8" fill="none"/><rect x="-7.200" y="-7.000" width="1.700" height="1.700" fill="#3f9ae8"/><rect x="4.800" y="-7.000" width="1.700" height="1.700" fill="#3f9ae8"/><rect x="-7.200" y="5.000" width="1.700" height="1.700" fill="#3f9ae8"/><rect x="-3.900" y="-3.700" width="1.700" height="1.700" fill="#3f9ae8"/><rect x="1.500" y="-3.700" width="1.700" height="1.700" fill="#3f9ae8"/><rect x="-3.900" y="1.600" width="1.700" height="1.700" fill="#3f9ae8"/><path d="M1.000 5.600L4.400 2.200L6.000 3.800L2.600 7.200z" fill="#f2b13c"/><path d="M4.400 2.200L5.400 1.200Q6.400 .6 7.000 1.600T6.800 3L6.000 3.800z" fill="#e93b3b"/><path d="M1.000 5.600L2.600 7.200L.4 7.600z" fill="#444"/></g><g transform="translate(168.2 729.2)"><path d="M-6.200 -3.800L-4.600 -6.800H3.900L3.900 3.900L2.300 6.800H-6.200z" fill="#4690d2"/><path d="M-6.200 -3.800L-4.600 -6.800H3.900L2.300 -3.800z" fill="#82c6f8"/><rect x="-6.200" y="-3.800" width="8.500" height="8.300" fill="#66ade6"/><path d="M-6.200 4.500H2.300L3.900 1.700V4L2.300 6.900H-6.200z" fill="#c2c2c2"/><path d="M5.500 -5.000V4.000" stroke="#444" stroke-width="0.7"/><path d="M5.500 -6.400l1.000 2.000h-2.000z" fill="#333"/></g><g transform="translate(188.2 729.2)"><path d="M-6.200 -3.800L-4.600 -6.800H3.900L3.900 3.900L2.300 6.800H-6.200z" fill="#4690d2"/><path d="M-6.200 -3.800L-4.600 -6.800H3.900L2.300 -3.800z" fill="#82c6f8"/><rect x="-6.200" y="-3.800" width="8.500" height="8.300" fill="#66ade6"/><path d="M-6.200 4.500H2.300L3.900 1.700V4L2.300 6.900H-6.200z" fill="#c2c2c2"/><path d="M5.500 -5.000V4.000" stroke="#444" stroke-width="0.7"/><path d="M5.500 -6.400l1.000 2.000h-2.000z" fill="#333"/></g><g transform="translate(208.2 729.2)"><path d="M-6.200 -3.800L-4.600 -6.800H3.900L3.900 3.900L2.300 6.800H-6.200z" fill="#4690d2"/><path d="M-6.200 -3.800L-4.600 -6.800H3.900L2.300 -3.800z" fill="#82c6f8"/><rect x="-6.200" y="-3.800" width="8.500" height="8.300" fill="#66ade6"/><path d="M-6.200 4.500H2.300L3.900 1.700V4L2.300 6.900H-6.200z" fill="#c2c2c2"/><path d="M5.500 -5.000V4.000" stroke="#444" stroke-width="0.7"/><path d="M5.500 -6.400l1.000 2.000h-2.000z" fill="#333"/></g><g transform="translate(228.2 729.2)"><path d="M-6.200 -3.800L-4.600 -6.800H3.900L3.900 3.900L2.300 6.800H-6.200z" fill="#4690d2"/><path d="M-6.200 -3.800L-4.600 -6.800H3.900L2.300 -3.800z" fill="#82c6f8"/><rect x="-6.200" y="-3.800" width="8.500" height="8.300" fill="#66ade6"/><path d="M-6.200 4.500H2.300L3.900 1.700V4L2.300 6.900H-6.200z" fill="#c2c2c2"/><path d="M5.500 -5.000V4.000" stroke="#444" stroke-width="0.7"/><path d="M5.500 -6.400l1.000 2.000h-2.000z" fill="#333"/></g><g transform="translate(248.2 729.2)"><path d="M0 -4.500V4.500M-4.500 0H4.500" stroke="#222" stroke-width="1.25"/><path d="M0 -6.500l2.600 3h-5.200zM0 6.500l2.600 -3h-5.200zM-6.500 0l3 -2.600v5.200zM6.500 0l-3 -2.600v5.200z" fill="#222"/></g><g transform="translate(268.2 729.2)"><path d="M-6.400 -6.200H5.600V2M-6.400 -6.200V5.800H2.400" stroke="#c2c2c2" stroke-width="0.9" fill="none"/><path d="M-3.000 -2.800H2.200M-3.000 -2.800V2.200" stroke="#c8c8c8" stroke-width="0.8" stroke-dasharray="1 0.700" fill="none"/><path d="M2.400 -2.800Q2.000 2.200 -3.000 2.500" stroke="#555" stroke-width="0.8" fill="none"/><rect x="-7.200" y="-7.000" width="1.700" height="1.700" fill="#3f9ae8"/><rect x="4.800" y="-7.000" width="1.700" height="1.700" fill="#3f9ae8"/><rect x="-7.200" y="5.000" width="1.700" height="1.700" fill="#3f9ae8"/><rect x="-3.900" y="-3.700" width="1.700" height="1.700" fill="#3f9ae8"/><rect x="1.500" y="-3.700" width="1.700" height="1.700" fill="#3f9ae8"/><rect x="-3.900" y="1.600" width="1.700" height="1.700" fill="#3f9ae8"/><path d="M1.000 5.600L4.400 2.200L6.000 3.800L2.600 7.200z" fill="#f2b13c"/><path d="M4.400 2.200L5.400 1.200Q6.400 .6 7.000 1.600T6.800 3L6.000 3.800z" fill="#e93b3b"/><path d="M1.000 5.600L2.600 7.200L.4 7.600z" fill="#444"/></g><g transform="translate(288.2 729.2)"><path d="M-6.200 -3.800L-4.600 -6.800H3.900L3.900 3.900L2.300 6.800H-6.200z" fill="#4690d2"/><path d="M-6.200 -3.800L-4.600 -6.800H3.900L2.300 -3.800z" fill="#82c6f8"/><rect x="-6.200" y="-3.800" width="8.500" height="8.300" fill="#66ade6"/><path d="M-6.200 4.500H2.300L3.900 1.700V4L2.300 6.900H-6.200z" fill="#c2c2c2"/><path d="M5.500 -5.000V4.000" stroke="#444" stroke-width="0.7"/><path d="M5.500 -6.400l1.000 2.000h-2.000z" fill="#333"/></g><g transform="translate(308.2 729.2)"><path d="M-6.200 -3.800L-4.600 -6.800H3.900L3.900 3.900L2.300 6.800H-6.200z" fill="#4690d2"/><path d="M-6.200 -3.800L-4.600 -6.800H3.900L2.300 -3.800z" fill="#82c6f8"/><rect x="-6.200" y="-3.800" width="8.500" height="8.300" fill="#66ade6"/><path d="M-6.200 4.500H2.300L3.900 1.700V4L2.300 6.900H-6.200z" fill="#c2c2c2"/><path d="M5.500 -5.000V4.000" stroke="#444" stroke-width="0.7"/><path d="M5.500 -6.400l1.000 2.000h-2.000z" fill="#333"/></g><g transform="translate(328.2 729.2)"><path d="M-6.200 -3.800L-4.600 -6.800H3.900L3.900 3.900L2.300 6.800H-6.200z" fill="#4690d2"/><path d="M-6.200 -3.800L-4.600 -6.800H3.900L2.300 -3.800z" fill="#82c6f8"/><rect x="-6.200" y="-3.800" width="8.500" height="8.300" fill="#66ade6"/><path d="M-6.200 4.500H2.300L3.900 1.700V4L2.300 6.900H-6.200z" fill="#c2c2c2"/><path d="M5.500 -5.000V4.000" stroke="#444" stroke-width="0.7"/><path d="M5.500 -6.400l1.000 2.000h-2.000z" fill="#333"/></g><g transform="translate(348.2 729.2)"><path d="M-2 -4.6L-0.19999999999999996 -7.0H7.0V0.20000000000000018L5.2 2.5999999999999996H-2z" fill="#4690d2"/><path d="M-2 -4.6L-0.19999999999999996 -7.0H7.0L5.2 -4.6z" fill="#82c6f8"/><rect x="-2" y="-4.6" width="7.200" height="7.200" fill="#66ade6"/><path d="M-6.6 -0.10000000000000009L-4.8 -2.5H2.4000000000000004V4.7L0.6000000000000005 7.1H-6.6z" fill="#4690d2"/><path d="M-6.6 -0.10000000000000009L-4.8 -2.5H2.4000000000000004L0.6000000000000005 -0.10000000000000009z" fill="#82c6f8"/><rect x="-6.6" y="-0.10000000000000009" width="7.200" height="7.200" fill="#66ade6"/></g><g transform="translate(368.2 729.2)"><path d="M-2 -4.6L-0.19999999999999996 -7.0H7.0V0.20000000000000018L5.2 2.5999999999999996H-2z" fill="#4690d2"/><path d="M-2 -4.6L-0.19999999999999996 -7.0H7.0L5.2 -4.6z" fill="#82c6f8"/><rect x="-2" y="-4.6" width="7.200" height="7.200" fill="#66ade6"/><path d="M-6.6 -0.10000000000000009L-4.8 -2.5H2.4000000000000004V4.7L0.6000000000000005 7.1H-6.6z" fill="#4690d2"/><path d="M-6.6 -0.10000000000000009L-4.8 -2.5H2.4000000000000004L0.6000000000000005 -0.10000000000000009z" fill="#82c6f8"/><rect x="-6.6" y="-0.10000000000000009" width="7.200" height="7.200" fill="#66ade6"/></g><g transform="translate(388.2 729.2)"><path d="M-6.200 -3.800L-4.600 -6.800H3.900L3.900 3.900L2.300 6.800H-6.200z" fill="#4690d2"/><path d="M-6.200 -3.800L-4.600 -6.800H3.900L2.300 -3.800z" fill="#82c6f8"/><rect x="-6.200" y="-3.800" width="8.500" height="8.300" fill="#66ade6"/><path d="M-6.200 4.500H2.300L3.900 1.700V4L2.300 6.900H-6.200z" fill="#c2c2c2"/><path d="M5.500 -5.000V4.000" stroke="#444" stroke-width="0.7"/><path d="M5.500 -6.400l1.000 2.000h-2.000z" fill="#333"/></g><g transform="translate(408.2 729.2)"><path d="M-6.200 -3.800L-4.600 -6.800H3.900L3.900 3.900L2.300 6.800H-6.200z" fill="#4690d2"/><path d="M-6.200 -3.800L-4.600 -6.800H3.900L2.300 -3.800z" fill="#82c6f8"/><rect x="-6.200" y="-3.800" width="8.500" height="8.300" fill="#66ade6"/><path d="M-6.200 4.500H2.300L3.900 1.700V4L2.300 6.900H-6.200z" fill="#c2c2c2"/><path d="M5.500 -5.000V4.000" stroke="#444" stroke-width="0.7"/><path d="M5.500 -6.400l1.000 2.000h-2.000z" fill="#333"/></g><g transform="translate(428.2 729.2)"><path d="M-6.200 -3.800L-4.600 -6.800H3.900L3.900 3.900L2.300 6.800H-6.200z" fill="#4690d2"/><path d="M-6.200 -3.800L-4.600 -6.800H3.900L2.300 -3.800z" fill="#82c6f8"/><rect x="-6.200" y="-3.800" width="8.500" height="8.300" fill="#66ade6"/><path d="M-6.200 4.500H2.300L3.900 1.700V4L2.300 6.900H-6.200z" fill="#c2c2c2"/><path d="M5.500 -5.000V4.000" stroke="#444" stroke-width="0.7"/><path d="M5.500 -6.400l1.000 2.000h-2.000z" fill="#333"/></g><g transform="translate(448.2 729.2)"><path d="M-6.200 -3.800L-4.600 -6.800H3.900L3.900 3.900L2.300 6.800H-6.200z" fill="#4690d2"/><path d="M-6.200 -3.800L-4.600 -6.800H3.900L2.300 -3.800z" fill="#82c6f8"/><rect x="-6.200" y="-3.800" width="8.500" height="8.300" fill="#66ade6"/><path d="M-6.200 4.500H2.300L3.900 1.700V4L2.300 6.900H-6.200z" fill="#c2c2c2"/><path d="M5.500 -5.000V4.000" stroke="#444" stroke-width="0.7"/><path d="M5.500 -6.400l1.000 2.000h-2.000z" fill="#333"/></g><g transform="translate(468.2 729.2)"><path d="M-6.200 -3.800L-4.600 -6.800H3.900L3.900 3.900L2.300 6.800H-6.200z" fill="#4690d2"/><path d="M-6.200 -3.800L-4.600 -6.800H3.900L2.300 -3.800z" fill="#82c6f8"/><rect x="-6.200" y="-3.800" width="8.500" height="8.300" fill="#66ade6"/><path d="M-6.200 4.500H2.300L3.900 1.700V4L2.300 6.900H-6.200z" fill="#c2c2c2"/><path d="M5.500 -5.000V4.000" stroke="#444" stroke-width="0.7"/><path d="M5.500 -6.400l1.000 2.000h-2.000z" fill="#333"/></g><g transform="translate(488.2 729.2)"><path d="M-6.200 -3.800L-4.600 -6.800H3.900L3.900 3.900L2.300 6.800H-6.200z" fill="#4690d2"/><path d="M-6.200 -3.800L-4.600 -6.800H3.900L2.300 -3.800z" fill="#82c6f8"/><rect x="-6.200" y="-3.800" width="8.500" height="8.300" fill="#66ade6"/><path d="M-6.200 4.500H2.300L3.900 1.700V4L2.300 6.900H-6.200z" fill="#c2c2c2"/><path d="M5.500 -5.000V4.000" stroke="#444" stroke-width="0.7"/><path d="M5.500 -6.400l1.000 2.000h-2.000z" fill="#333"/></g><g transform="translate(508.2 729.2)"><path d="M-6.200 -3.800L-4.600 -6.800H3.900L3.900 3.900L2.300 6.800H-6.200z" fill="#4690d2"/><path d="M-6.200 -3.800L-4.600 -6.800H3.900L2.300 -3.800z" fill="#82c6f8"/><rect x="-6.200" y="-3.800" width="8.500" height="8.300" fill="#66ade6"/><path d="M-6.200 4.500H2.300L3.900 1.700V4L2.300 6.900H-6.200z" fill="#c2c2c2"/><path d="M5.500 -5.000V4.000" stroke="#444" stroke-width="0.7"/><path d="M5.500 -6.400l1.000 2.000h-2.000z" fill="#333"/></g><g transform="translate(528.2 729.2)"><path d="M-6.200 -3.800L-4.600 -6.800H3.900L3.900 3.900L2.300 6.800H-6.200z" fill="#4690d2"/><path d="M-6.200 -3.800L-4.600 -6.800H3.900L2.300 -3.800z" fill="#82c6f8"/><rect x="-6.200" y="-3.800" width="8.500" height="8.300" fill="#66ade6"/><path d="M-6.200 4.500H2.300L3.900 1.700V4L2.300 6.900H-6.200z" fill="#c2c2c2"/><path d="M5.500 -5.000V4.000" stroke="#444" stroke-width="0.7"/><path d="M5.500 -6.400l1.000 2.000h-2.000z" fill="#333"/></g><g transform="translate(548.2 729.2)"><path d="M-6.200 -3.800L-4.600 -6.800H3.900L3.900 3.900L2.300 6.800H-6.200z" fill="#4690d2"/><path d="M-6.200 -3.800L-4.600 -6.800H3.900L2.300 -3.800z" fill="#82c6f8"/><rect x="-6.200" y="-3.800" width="8.500" height="8.300" fill="#66ade6"/><path d="M-6.200 4.500H2.300L3.900 1.700V4L2.300 6.900H-6.200z" fill="#c2c2c2"/><path d="M5.500 -5.000V4.000" stroke="#444" stroke-width="0.7"/><path d="M5.500 -6.400l1.000 2.000h-2.000z" fill="#333"/></g><g transform="translate(568.2 729.2)"><path d="M-6.200 -3.800L-4.600 -6.800H3.900L3.900 3.900L2.300 6.800H-6.200z" fill="#4690d2"/><path d="M-6.200 -3.800L-4.600 -6.800H3.900L2.300 -3.800z" fill="#82c6f8"/><rect x="-6.200" y="-3.800" width="8.500" height="8.300" fill="#66ade6"/><path d="M-6.200 4.500H2.300L3.900 1.700V4L2.300 6.900H-6.200z" fill="#c2c2c2"/><path d="M5.500 -5.000V4.000" stroke="#444" stroke-width="0.7"/><path d="M5.500 -6.400l1.000 2.000h-2.000z" fill="#333"/></g><g transform="translate(588.2 729.2)"><path d="M0 -4.500V4.500M-4.500 0H4.500" stroke="#222" stroke-width="1.25"/><path d="M0 -6.500l2.600 3h-5.200zM0 6.500l2.600 -3h-5.200zM-6.500 0l3 -2.600v5.200zM6.500 0l-3 -2.600v5.200z" fill="#222"/></g><g transform="translate(608.2 729.2)"><path d="M-6.200 -3.800L-4.600 -6.800H3.900L3.900 3.900L2.300 6.800H-6.200z" fill="#4690d2"/><path d="M-6.200 -3.800L-4.600 -6.800H3.900L2.300 -3.800z" fill="#82c6f8"/><rect x="-6.200" y="-3.800" width="8.500" height="8.300" fill="#66ade6"/><path d="M-6.200 4.500H2.300L3.900 1.700V4L2.300 6.900H-6.200z" fill="#c2c2c2"/><path d="M5.500 -5.000V4.000" stroke="#444" stroke-width="0.7"/><path d="M5.500 -6.400l1.000 2.000h-2.000z" fill="#333"/></g><g transform="translate(628.2 729.2)"><path d="M-6.200 -3.800L-4.600 -6.800H3.900L3.900 3.900L2.300 6.800H-6.200z" fill="#4690d2"/><path d="M-6.200 -3.800L-4.600 -6.800H3.900L2.300 -3.800z" fill="#82c6f8"/><rect x="-6.200" y="-3.800" width="8.500" height="8.300" fill="#66ade6"/><path d="M-6.200 4.500H2.300L3.900 1.700V4L2.300 6.900H-6.200z" fill="#c2c2c2"/><path d="M5.500 -5.000V4.000" stroke="#444" stroke-width="0.7"/><path d="M5.500 -6.400l1.000 2.000h-2.000z" fill="#333"/></g><g transform="translate(648.2 729.2)"><path d="M-6.200 -3.800L-4.600 -6.800H3.900L3.900 3.900L2.300 6.800H-6.200z" fill="#4690d2"/><path d="M-6.200 -3.800L-4.600 -6.800H3.900L2.300 -3.800z" fill="#82c6f8"/><rect x="-6.200" y="-3.800" width="8.500" height="8.300" fill="#66ade6"/><path d="M-6.200 4.500H2.300L3.900 1.700V4L2.300 6.900H-6.200z" fill="#c2c2c2"/><path d="M5.500 -5.000V4.000" stroke="#444" stroke-width="0.7"/><path d="M5.500 -6.400l1.000 2.000h-2.000z" fill="#333"/></g><g transform="translate(668.2 729.2)"><path d="M-6.200 -3.800L-4.600 -6.800H3.900L3.900 3.900L2.300 6.800H-6.200z" fill="#4690d2"/><path d="M-6.200 -3.800L-4.600 -6.800H3.900L2.300 -3.800z" fill="#82c6f8"/><rect x="-6.200" y="-3.800" width="8.500" height="8.300" fill="#66ade6"/><path d="M-6.200 4.500H2.300L3.900 1.700V4L2.300 6.900H-6.200z" fill="#c2c2c2"/><path d="M5.500 -5.000V4.000" stroke="#444" stroke-width="0.7"/><path d="M5.500 -6.400l1.000 2.000h-2.000z" fill="#333"/></g><g transform="translate(688.2 729.2)"><path d="M0 -4.500V4.500M-4.500 0H4.500" stroke="#222" stroke-width="1.25"/><path d="M0 -6.500l2.600 3h-5.200zM0 6.500l2.600 -3h-5.200zM-6.500 0l3 -2.600v5.200zM6.500 0l-3 -2.600v5.200z" fill="#222"/></g><g transform="translate(708.2 729.2)"><path d="M-6.400 -6.200H5.600V2M-6.400 -6.200V5.800H2.400" stroke="#c2c2c2" stroke-width="0.9" fill="none"/><path d="M-3.000 -2.800H2.200M-3.000 -2.800V2.200" stroke="#c8c8c8" stroke-width="0.8" stroke-dasharray="1 0.700" fill="none"/><path d="M2.400 -2.800Q2.000 2.200 -3.000 2.500" stroke="#555" stroke-width="0.8" fill="none"/><rect x="-7.200" y="-7.000" width="1.700" height="1.700" fill="#3f9ae8"/><rect x="4.800" y="-7.000" width="1.700" height="1.700" fill="#3f9ae8"/><rect x="-7.200" y="5.000" width="1.700" height="1.700" fill="#3f9ae8"/><rect x="-3.900" y="-3.700" width="1.700" height="1.700" fill="#3f9ae8"/><rect x="1.500" y="-3.700" width="1.700" height="1.700" fill="#3f9ae8"/><rect x="-3.900" y="1.600" width="1.700" height="1.700" fill="#3f9ae8"/><path d="M1.000 5.600L4.400 2.200L6.000 3.800L2.600 7.200z" fill="#f2b13c"/><path d="M4.400 2.200L5.400 1.200Q6.400 .6 7.000 1.600T6.800 3L6.000 3.800z" fill="#e93b3b"/><path d="M1.000 5.600L2.600 7.200L.4 7.600z" fill="#444"/></g><g transform="translate(728.2 729.2)"><path d="M-6.200 -3.800L-4.600 -6.800H3.900L3.900 3.900L2.300 6.800H-6.200z" fill="#4690d2"/><path d="M-6.200 -3.800L-4.600 -6.800H3.900L2.300 -3.800z" fill="#82c6f8"/><rect x="-6.200" y="-3.800" width="8.500" height="8.300" fill="#66ade6"/><path d="M-6.200 4.500H2.300L3.900 1.700V4L2.300 6.900H-6.200z" fill="#c2c2c2"/><path d="M5.500 -5.000V4.000" stroke="#444" stroke-width="0.7"/><path d="M5.500 -6.400l1.000 2.000h-2.000z" fill="#333"/></g><g transform="translate(748.2 729.2)"><path d="M0 -4.500V4.500M-4.500 0H4.500" stroke="#222" stroke-width="1.25"/><path d="M0 -6.500l2.600 3h-5.200zM0 6.500l2.600 -3h-5.200zM-6.500 0l3 -2.600v5.200zM6.500 0l-3 -2.600v5.200z" fill="#222"/></g><g transform="translate(768.2 729.2)"><path d="M0 -4.500V4.500M-4.500 0H4.500" stroke="#222" stroke-width="1.25"/><path d="M0 -6.500l2.600 3h-5.200zM0 6.500l2.600 -3h-5.200zM-6.500 0l3 -2.600v5.200zM6.500 0l-3 -2.600v5.200z" fill="#222"/></g><g transform="translate(788.2 729.2)"><path d="M0 -4.500V4.500M-4.500 0H4.500" stroke="#222" stroke-width="1.25"/><path d="M0 -6.500l2.600 3h-5.200zM0 6.500l2.600 -3h-5.200zM-6.500 0l3 -2.600v5.200zM6.500 0l-3 -2.600v5.200z" fill="#222"/></g><g transform="translate(808.2 729.2)"><path d="M0 -4.500V4.500M-4.500 0H4.500" stroke="#222" stroke-width="1.25"/><path d="M0 -6.500l2.600 3h-5.200zM0 6.500l2.600 -3h-5.200zM-6.500 0l3 -2.600v5.200zM6.500 0l-3 -2.600v5.200z" fill="#222"/></g><g transform="translate(828.2 729.2)"><path d="M0 -4.500V4.500M-4.500 0H4.500" stroke="#222" stroke-width="1.25"/><path d="M0 -6.500l2.600 3h-5.200zM0 6.500l2.600 -3h-5.200zM-6.500 0l3 -2.600v5.200zM6.500 0l-3 -2.600v5.200z" fill="#222"/></g><g transform="translate(848.2 729.2)"><path d="M-6.000 -4.400L-4.200 -7H5.800V-2.600L4.000 0H-6.000z" fill="#4690d2"/><path d="M-6.000 -4.400L-4.200 -7H5.800L4.000 -4.400z" fill="#82c6f8"/><rect x="-6.000" y="-4.400" width="10.000" height="4.400" fill="#66ade6"/><path d="M-6.000 2.200H4.000L5.800 -0.400V3.800L4.000 6.600H-6.000z" fill="#cfcfcf"/><rect x="-6.000" y="2.000" width="10.000" height="4.600" fill="#e2e2e2" stroke="#c4c4c4" stroke-width="0.4"/><path d="M-6.800 1.200H4.200L6.600 -2.200" stroke="#8ccaf8" stroke-width="1.2" fill="none"/></g><g transform="translate(868.2 729.2)"><path d="M0 -4.500V4.500M-4.500 0H4.500" stroke="#222" stroke-width="1.25"/><path d="M0 -6.500l2.600 3h-5.200zM0 6.500l2.600 -3h-5.200zM-6.500 0l3 -2.600v5.200zM6.500 0l-3 -2.600v5.200z" fill="#222"/></g><g transform="translate(888.2 729.2)"><path d="M0 -4.500V4.500M-4.500 0H4.500" stroke="#222" stroke-width="1.25"/><path d="M0 -6.500l2.600 3h-5.200zM0 6.500l2.600 -3h-5.200zM-6.500 0l3 -2.600v5.200zM6.500 0l-3 -2.600v5.200z" fill="#222"/></g><g transform="translate(908.2 729.2)"><path d="M0 -4.500V4.500M-4.500 0H4.500" stroke="#222" stroke-width="1.25"/><path d="M0 -6.500l2.600 3h-5.200zM0 6.500l2.600 -3h-5.200zM-6.500 0l3 -2.600v5.200zM6.500 0l-3 -2.600v5.200z" fill="#222"/></g><g transform="translate(928.2 729.2)"><path d="M0 -4.500V4.500M-4.500 0H4.500" stroke="#222" stroke-width="1.25"/><path d="M0 -6.500l2.600 3h-5.200zM0 6.500l2.600 -3h-5.200zM-6.500 0l3 -2.600v5.200zM6.500 0l-3 -2.600v5.200z" fill="#222"/></g><g transform="translate(948.2 729.2)"><path d="M0 -4.500V4.500M-4.500 0H4.500" stroke="#222" stroke-width="1.25"/><path d="M0 -6.500l2.600 3h-5.200zM0 6.500l2.600 -3h-5.200zM-6.500 0l3 -2.600v5.200zM6.500 0l-3 -2.600v5.200z" fill="#222"/></g><g transform="translate(968.2 729.2)"><path d="M0 -4.500V4.500M-4.500 0H4.500" stroke="#222" stroke-width="1.25"/><path d="M0 -6.500l2.600 3h-5.200zM0 6.500l2.600 -3h-5.200zM-6.500 0l3 -2.600v5.200zM6.500 0l-3 -2.600v5.200z" fill="#222"/></g><g transform="translate(988.2 729.2)"><path d="M-2 -4.6L-0.19999999999999996 -7.0H7.0V0.20000000000000018L5.2 2.5999999999999996H-2z" fill="#4690d2"/><path d="M-2 -4.6L-0.19999999999999996 -7.0H7.0L5.2 -4.6z" fill="#82c6f8"/><rect x="-2" y="-4.6" width="7.200" height="7.200" fill="#66ade6"/><path d="M-6.6 -0.10000000000000009L-4.8 -2.5H2.4000000000000004V4.7L0.6000000000000005 7.1H-6.6z" fill="#4690d2"/><path d="M-6.6 -0.10000000000000009L-4.8 -2.5H2.4000000000000004L0.6000000000000005 -0.10000000000000009z" fill="#82c6f8"/><rect x="-6.6" y="-0.10000000000000009" width="7.200" height="7.200" fill="#66ade6"/></g><g transform="translate(1008.2 729.2)"><path d="M-6.000 -4.400L-4.200 -7H5.800V-2.600L4.000 0H-6.000z" fill="#4690d2"/><path d="M-6.000 -4.400L-4.200 -7H5.800L4.000 -4.400z" fill="#82c6f8"/><rect x="-6.000" y="-4.400" width="10.000" height="4.400" fill="#66ade6"/><path d="M-6.000 2.200H4.000L5.800 -0.400V3.800L4.000 6.600H-6.000z" fill="#cfcfcf"/><rect x="-6.000" y="2.000" width="10.000" height="4.600" fill="#e2e2e2" stroke="#c4c4c4" stroke-width="0.4"/><path d="M-6.800 1.200H4.200L6.600 -2.200" stroke="#8ccaf8" stroke-width="1.2" fill="none"/></g><g transform="translate(1028.2 729.2)"><path d="M-2 -4.6L-0.19999999999999996 -7.0H7.0V0.20000000000000018L5.2 2.5999999999999996H-2z" fill="#4690d2"/><path d="M-2 -4.6L-0.19999999999999996 -7.0H7.0L5.2 -4.6z" fill="#82c6f8"/><rect x="-2" y="-4.6" width="7.200" height="7.200" fill="#66ade6"/><path d="M-6.6 -0.10000000000000009L-4.8 -2.5H2.4000000000000004V4.7L0.6000000000000005 7.1H-6.6z" fill="#4690d2"/><path d="M-6.6 -0.10000000000000009L-4.8 -2.5H2.4000000000000004L0.6000000000000005 -0.10000000000000009z" fill="#82c6f8"/><rect x="-6.6" y="-0.10000000000000009" width="7.200" height="7.200" fill="#66ade6"/></g><g transform="translate(1048.2 729.2)"><path d="M-6.200 -3.800L-4.600 -6.800H3.900L3.900 3.900L2.300 6.800H-6.200z" fill="#4690d2"/><path d="M-6.200 -3.800L-4.600 -6.800H3.900L2.300 -3.800z" fill="#82c6f8"/><rect x="-6.200" y="-3.800" width="8.500" height="8.300" fill="#66ade6"/><path d="M-6.200 4.500H2.300L3.900 1.700V4L2.300 6.900H-6.200z" fill="#c2c2c2"/><path d="M5.500 -5.000V4.000" stroke="#444" stroke-width="0.7"/><path d="M5.500 -6.400l1.000 2.000h-2.000z" fill="#333"/></g><g transform="translate(1068.2 729.2)"><path d="M-6.400 -6.200H5.600V2M-6.400 -6.200V5.800H2.400" stroke="#c2c2c2" stroke-width="0.9" fill="none"/><path d="M-3.000 -2.800H2.200M-3.000 -2.800V2.200" stroke="#c8c8c8" stroke-width="0.8" stroke-dasharray="1 0.700" fill="none"/><path d="M2.400 -2.800Q2.000 2.200 -3.000 2.500" stroke="#555" stroke-width="0.8" fill="none"/><rect x="-7.200" y="-7.000" width="1.700" height="1.700" fill="#3f9ae8"/><rect x="4.800" y="-7.000" width="1.700" height="1.700" fill="#3f9ae8"/><rect x="-7.200" y="5.000" width="1.700" height="1.700" fill="#3f9ae8"/><rect x="-3.900" y="-3.700" width="1.700" height="1.700" fill="#3f9ae8"/><rect x="1.500" y="-3.700" width="1.700" height="1.700" fill="#3f9ae8"/><rect x="-3.900" y="1.600" width="1.700" height="1.700" fill="#3f9ae8"/><path d="M1.000 5.600L4.400 2.200L6.000 3.800L2.600 7.200z" fill="#f2b13c"/><path d="M4.400 2.200L5.400 1.200Q6.400 .6 7.000 1.600T6.800 3L6.000 3.800z" fill="#e93b3b"/><path d="M1.000 5.600L2.600 7.200L.4 7.600z" fill="#444"/></g><g transform="translate(1088.2 729.2)"><path d="M-6.200 -3.800L-4.600 -6.800H3.900L3.900 3.900L2.300 6.800H-6.200z" fill="#4690d2"/><path d="M-6.200 -3.800L-4.600 -6.800H3.900L2.300 -3.800z" fill="#82c6f8"/><rect x="-6.200" y="-3.800" width="8.500" height="8.300" fill="#66ade6"/><path d="M-6.200 4.500H2.300L3.900 1.700V4L2.300 6.900H-6.200z" fill="#c2c2c2"/><path d="M5.500 -5.000V4.000" stroke="#444" stroke-width="0.7"/><path d="M5.500 -6.400l1.000 2.000h-2.000z" fill="#333"/></g><g transform="translate(1108.2 729.2)"><path d="M0 -4.500V4.500M-4.500 0H4.500" stroke="#222" stroke-width="1.25"/><path d="M0 -6.500l2.600 3h-5.200zM0 6.500l2.600 -3h-5.200zM-6.500 0l3 -2.600v5.200zM6.500 0l-3 -2.600v5.200z" fill="#222"/></g><g transform="translate(1128.2 729.2)"><path d="M0 -4.500V4.500M-4.500 0H4.500" stroke="#222" stroke-width="1.25"/><path d="M0 -6.500l2.600 3h-5.200zM0 6.500l2.600 -3h-5.200zM-6.500 0l3 -2.600v5.200zM6.500 0l-3 -2.600v5.200z" fill="#222"/></g><g transform="translate(1148.2 729.2)"><path d="M0 -4.500V4.500M-4.500 0H4.500" stroke="#222" stroke-width="1.25"/><path d="M0 -6.500l2.600 3h-5.200zM0 6.500l2.600 -3h-5.200zM-6.500 0l3 -2.600v5.200zM6.500 0l-3 -2.600v5.200z" fill="#222"/></g><path d="M1153.300 717.600h9.800v2.800l-3.800 3.800h-2.200l-3.800-3.800z" fill="#5f5f5f"/><rect x="1157.100" y="722" width="2.100" height="22.200" fill="#5f5f5f"/><rect x="1181.0" y="725.6" width="3.000" height="3.400" fill="#9b9b9b" transform="rotate(0 1182.5 732.6)"/><rect x="1181.0" y="725.6" width="3.000" height="3.400" fill="#9b9b9b" transform="rotate(45 1182.5 732.6)"/><rect x="1181.0" y="725.6" width="3.000" height="3.400" fill="#9b9b9b" transform="rotate(90 1182.5 732.6)"/><rect x="1181.0" y="725.6" width="3.000" height="3.400" fill="#9b9b9b" transform="rotate(135 1182.5 732.6)"/><rect x="1181.0" y="725.6" width="3.000" height="3.400" fill="#9b9b9b" transform="rotate(180 1182.5 732.6)"/><rect x="1181.0" y="725.6" width="3.000" height="3.400" fill="#9b9b9b" transform="rotate(225 1182.5 732.6)"/><rect x="1181.0" y="725.6" width="3.000" height="3.400" fill="#9b9b9b" transform="rotate(270 1182.5 732.6)"/><rect x="1181.0" y="725.6" width="3.000" height="3.400" fill="#9b9b9b" transform="rotate(315 1182.5 732.6)"/><circle cx="1182.5" cy="732.6" r="4.000" fill="none" stroke="#9b9b9b" stroke-width="2.800"/><rect x="1187" y="710.200" width="8.200" height="4.600" rx="2.300" fill="#cacaca"/></svg>
</div></body></html>
